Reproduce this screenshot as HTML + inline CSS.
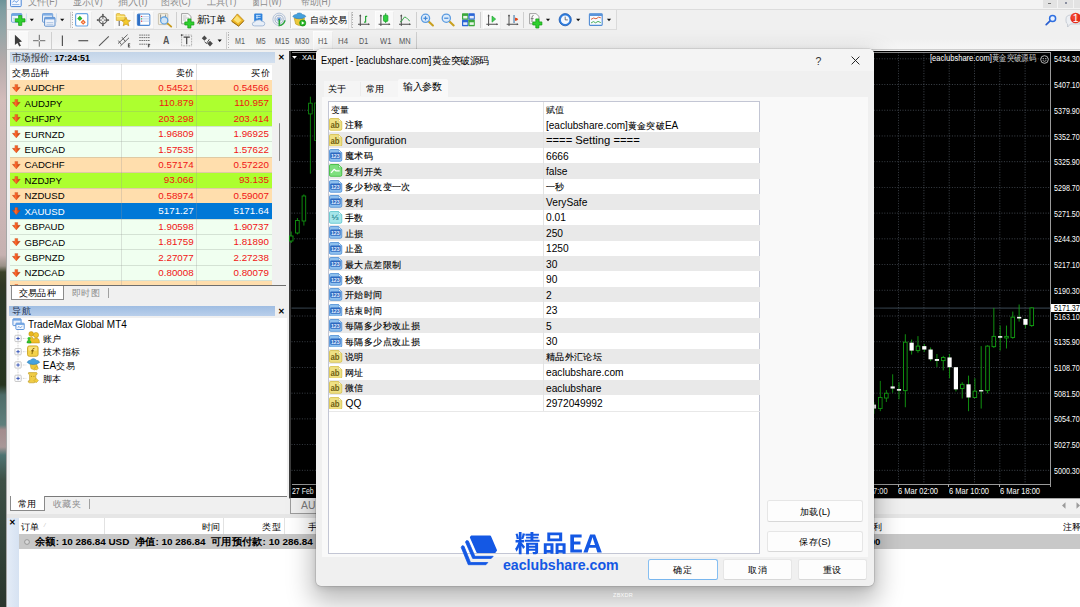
<!DOCTYPE html><html lang="zh"><head><meta charset="utf-8"><title>MT4 Expert</title><style>
*{box-sizing:border-box;margin:0;padding:0}
html,body{width:1080px;height:607px;overflow:hidden;background:#f0f0f0;font-family:"Liberation Sans",sans-serif;color:#000}
body{position:relative}
.a{position:absolute}
.t{position:absolute;white-space:nowrap;line-height:1}
.r{text-align:right}
</style></head><body>
<div class="a" style="left:0px;top:0px;width:6.2px;height:607px;background:linear-gradient(180deg,#6d9498 0px,#7d9da0 8px,#93a6a8 30px,#b3aaaa 60px,#d2bcbb 100px,#cdb9b8 150px,#cdb6b6 200px,#c6b1b1 255px,#9a9088 266px,#3a4228 272px,#2f3824 285px,#2a3826 300px,#26341f 385px,#4d6b68 395px,#5e7f7c 425px,#a38d8e 430px,#a89898 447px,#4e7472 455px,#3d4f45 480px,#33443a 540px,#2a362e 607px);"></div>
<div class="a" style="left:5.8px;top:0px;width:0.9px;height:607px;background:#a6a6a6;"></div>
<div class="a" style="left:6.7px;top:0px;width:1074px;height:607px;background:#f0f0f0;"></div>
<div class="a" style="left:7px;top:0px;width:1073px;height:9px;background:#f3f3f3;"></div>
<div class="a" style="left:7px;top:9px;width:1073px;height:1px;background:#dcdcdc;"></div>
<div class="t " style="left:27.5px;top:-4.05px;font-size:10.5px;color:#8c8c8c;;transform:scaleX(0.8328);transform-origin:left center;">文件(F)</div>
<div class="t " style="left:72.5px;top:-4.05px;font-size:10.5px;color:#8c8c8c;;transform:scaleX(0.8194);transform-origin:left center;">显示(V)</div>
<div class="t " style="left:118px;top:-4.05px;font-size:10.5px;color:#8c8c8c;;transform:scaleX(0.9241);transform-origin:left center;">插入(I)</div>
<div class="t " style="left:161px;top:-4.05px;font-size:10.5px;color:#8c8c8c;;transform:scaleX(0.8065);transform-origin:left center;">图表(C)</div>
<div class="t " style="left:206.7px;top:-4.05px;font-size:10.5px;color:#8c8c8c;;transform:scaleX(0.8328);transform-origin:left center;">工具(T)</div>
<div class="t " style="left:251.7px;top:-4.05px;font-size:10.5px;color:#8c8c8c;;transform:scaleX(0.7582);transform-origin:left center;">窗口(W)</div>
<div class="t " style="left:300.8px;top:-4.05px;font-size:10.5px;color:#8c8c8c;;transform:scaleX(0.8065);transform-origin:left center;">帮助(H)</div>
<div class="a" style="left:7px;top:10px;width:610px;height:19.8px;background:#f2f2f2;border-right:1px solid #dadada;border-bottom:1px solid #dcdcdc"></div>
<div class="a" style="left:7px;top:30px;width:1073px;height:19.8px;background:linear-gradient(180deg,#f0f0f0 0%,#f0f0f0 45%,#f6f6f6 100%);border-bottom:0.8px solid #cdcdcd"></div>
<div class="a" style="left:7.6px;top:12px;width:0.8px;height:16px;background:repeating-linear-gradient(180deg,#b4b4b4 0 0.8px,transparent 0.8px 1.7px)"></div>
<div class="a" style="left:7.6px;top:32px;width:0.8px;height:16.5px;background:repeating-linear-gradient(180deg,#b4b4b4 0 0.8px,transparent 0.8px 1.7px)"></div>
<div class="a" style="left:70.4px;top:11.5px;width:0.8px;height:16.5px;background:#cfcfcf"></div>
<div class="a" style="left:72.4px;top:12px;width:0.8px;height:16px;background:repeating-linear-gradient(180deg,#b4b4b4 0 0.8px,transparent 0.8px 1.7px)"></div>
<div class="a" style="left:73px;top:11px;width:19.00px;height:17.60px;background:#f9f9f9;box-shadow:inset 0.6px 0.6px 0 #fff,inset -0.5px -0.5px 0 #e2e2e2"></div>
<div class="a" style="left:113.8px;top:11px;width:19.90px;height:17.60px;background:#f9f9f9;box-shadow:inset 0.6px 0.6px 0 #fff,inset -0.5px -0.5px 0 #e2e2e2"></div>
<div class="a" style="left:135px;top:11px;width:18.80px;height:17.60px;background:#f9f9f9;box-shadow:inset 0.6px 0.6px 0 #fff,inset -0.5px -0.5px 0 #e2e2e2"></div>
<div class="a" style="left:175.8px;top:11.5px;width:0.8px;height:16.5px;background:#cfcfcf"></div>
<div class="a" style="left:290px;top:11.5px;width:0.8px;height:16.5px;background:#cfcfcf"></div>
<div class="a" style="left:290.8px;top:10.8px;width:58.4px;height:18px;background:#f9f9f9;box-shadow:inset 0.6px 0.6px 0 #fff,inset -0.6px -0.6px 0 #dcdcdc"></div>
<div class="a" style="left:350.6px;top:11.5px;width:0.8px;height:16.5px;background:#cfcfcf"></div>
<div class="a" style="left:352px;top:12px;width:0.8px;height:16px;background:repeating-linear-gradient(180deg,#b4b4b4 0 0.8px,transparent 0.8px 1.7px)"></div>
<div class="a" style="left:374.7px;top:11px;width:19.10px;height:17.60px;background:#f9f9f9;box-shadow:inset 0.6px 0.6px 0 #fff,inset -0.5px -0.5px 0 #e2e2e2"></div>
<div class="a" style="left:415.5px;top:11.5px;width:0.8px;height:16.5px;background:#cfcfcf"></div>
<div class="a" style="left:480.3px;top:11.5px;width:0.8px;height:16.5px;background:#cfcfcf"></div>
<div class="a" style="left:482.8px;top:11px;width:18.70px;height:17.60px;background:#f9f9f9;box-shadow:inset 0.6px 0.6px 0 #fff,inset -0.5px -0.5px 0 #e2e2e2"></div>
<div class="a" style="left:523px;top:11.5px;width:0.8px;height:16.5px;background:#cfcfcf"></div>
<div class="a" style="left:9.4px;top:31px;width:19.40px;height:18.40px;background:#f9f9f9;box-shadow:inset 0.6px 0.6px 0 #fff,inset -0.5px -0.5px 0 #e2e2e2"></div>
<div class="a" style="left:50.5px;top:32px;width:0.8px;height:17px;background:#cfcfcf"></div>
<div class="a" style="left:226.4px;top:32px;width:0.8px;height:17px;background:#cfcfcf"></div>
<div class="a" style="left:228.3px;top:32px;width:0.8px;height:16.5px;background:repeating-linear-gradient(180deg,#b4b4b4 0 0.8px,transparent 0.8px 1.7px)"></div>
<div class="a" style="left:313.3px;top:31px;width:19.50px;height:18.60px;background:#f9f9f9;box-shadow:inset 0.6px 0.6px 0 #fff,inset -0.5px -0.5px 0 #e2e2e2"></div>
<div class="a" style="left:415.5px;top:32px;width:0.8px;height:17px;background:#cfcfcf"></div>
<svg class="a" style="left:0;top:0" width="1080" height="52" viewBox="0 0 1080 52"><rect x="11.6" y="13.6" width="10.2" height="8.6" rx="0.8" fill="#f4f8fd" stroke="#5e97d6" stroke-width="0.9"/><rect x="11.6" y="13.6" width="10.2" height="2.3" fill="#6ea6e2"/><path d="M13 18.3H15.5M13 20H15" stroke="#8fb4e0" stroke-width="0.7"/>
<path d="M18.6 15.6H21.8V18.8H25V22H21.8V25.4H18.6V22H15.3V18.8H18.6Z" fill="#2fd02f" stroke="#109a10" stroke-width="0.7" stroke-linejoin="round"/>
<path d="M26.4 13.4V22.3" stroke="#bcd4ee" stroke-width="0.7"/>
<path d="M29.7 18.8H33.9L31.8 21.2Z" fill="#111"/>
<rect x="42.5" y="13.6" width="10.2" height="8.6" rx="0.8" fill="#e6eef9" stroke="#5e90cf" stroke-width="0.9"/><rect x="42.5" y="13.6" width="10.2" height="2" fill="#7faee4"/>
<rect x="44.6" y="17.4" width="10.4" height="8.8" rx="0.8" fill="#eef3fb" stroke="#4f84c6" stroke-width="0.9"/><rect x="44.6" y="17.4" width="10.4" height="2" fill="#6d9fdc"/><path d="M46.5 22.5H53.3M46.5 24.3H53.3" stroke="#9db9dd" stroke-width="0.7"/>
<path d="M56.4 13.4V22.3" stroke="#bcd4ee" stroke-width="0.7"/>
<path d="M60.1 18.8H64.3L62.2 21.2Z" fill="#111"/>
<rect x="75.6" y="13.6" width="12.2" height="12.4" rx="1.6" fill="#fff" stroke="#6aa6e4" stroke-width="1.2"/>
<path d="M79.8 15.8L82.4 18.4L79.8 21L77.2 18.4Z" fill="#2bb32b"/><path d="M83.2 19.6L85.8 22.2L83.2 24.8L80.6 22.2Z" fill="#ee6a2e"/><circle cx="83.2" cy="22.2" r="0.8" fill="#ffd8c0"/>
<circle cx="102.9" cy="20.1" r="3.7" fill="none" stroke="#5a5a5a" stroke-width="1.1"/><path d="M102.9 14.2V26M97 20.1H108.8" stroke="#5a5a5a" stroke-width="1"/><path d="M102.9 13.6L104.2 15.6H101.6ZM102.9 26.6L104.2 24.6H101.6ZM96.4 20.1L98.4 18.8V21.4ZM109.4 20.1L107.4 18.8V21.4Z" fill="#555"/><circle cx="102.9" cy="20.1" r="1.2" fill="#f0f0f0"/>
<path d="M116.3 14.6Q116.3 13.6 117.3 13.6H119.6L120.6 14.8H124.2Q125 14.8 125 15.8V20.4H116.3Z" fill="#f6d95c" stroke="#d2a52a" stroke-width="0.7"/><path d="M116.6 16.4H124.8" stroke="#fff3b0" stroke-width="0.8"/>
<path d="M119.2 21V26" stroke="#333" stroke-width="0.8"/>
<path d="M126 17.2L127.3 20.2L130.4 20.5L128 22.6L128.8 25.8L126 24.1L123.2 25.8L124 22.6L121.6 20.5L124.7 20.2Z" fill="#f4cb2c" stroke="#c89612" stroke-width="0.7" stroke-linejoin="round"/>
<rect x="137.4" y="14" width="12.4" height="11.4" rx="1.2" fill="#fff" stroke="#4c8bd6" stroke-width="1.1"/><rect x="137.6" y="14.2" width="2.6" height="11" fill="#2f6fc4"/><path d="M140.6 16.6H149.4M140.6 18.9H149.4M140.6 21.2H149.4" stroke="#c5d7f2" stroke-width="1.2"/><circle cx="141.6" cy="16.4" r="0.6" fill="#e33"/><circle cx="141.6" cy="18.8" r="0.6" fill="#2a2"/><circle cx="141.6" cy="21.2" r="0.6" fill="#e33"/>
<rect x="158.4" y="13.6" width="9.4" height="11" rx="0.6" fill="#f3efe4" stroke="#b9b09a" stroke-width="0.7"/><path d="M160.6 14.5V19M165.6 14.5V19" stroke="#666" stroke-width="0.7"/>
<path d="M166.6 22.6L171.2 26.6" stroke="#c79a1c" stroke-width="1.9" stroke-linecap="round"/><circle cx="164.2" cy="20.4" r="3.6" fill="#cfe4f7" fill-opacity=".92" stroke="#5a9fe0" stroke-width="1.2"/>
<path d="M181.6 13.6H188L191 16.4V23.8H181.6Z" fill="#fbfbfb" stroke="#8c8c8c" stroke-width="0.8"/><path d="M183 16H186.5M183 18H189M183 20H186" stroke="#aaa" stroke-width="0.7"/>
<path d="M187.8 18.9H190.9V21.9H193.9V25H190.9V28H187.8V25H184.8V21.9H187.8Z" fill="#2fd02f" stroke="#109a10" stroke-width="0.7" stroke-linejoin="round"/>
<path d="M237.4 13.9L243.9 20.6L238.6 25.9L231.5 20.9Z" fill="#efb928" stroke="#b8800f" stroke-width="0.8" stroke-linejoin="round"/><path d="M236.9 15.6L241.4 20.3L238 23.2L233.6 19.7Z" fill="#fbe27a"/><path d="M231.7 21.4L238.6 26.2L243.8 21" stroke="#9a6a08" stroke-width="0.9" fill="none"/>
<rect x="254.2" y="13.4" width="8.2" height="8" rx="1" fill="#2e82dc"/><path d="M256 15.4H260.6M256 17.4H260.6M257 15.4V19" stroke="#d8ecff" stroke-width="0.8"/><path d="M254.6 25.9Q252.2 25.9 252.3 23.8Q252.5 21.8 254.7 21.9Q255.6 19.6 258.2 20.1Q260.3 18.9 261.8 21.3Q264.8 21.2 264.8 23.7Q264.7 25.9 262.4 25.9Z" fill="#e8eff8" stroke="#8aa6cc" stroke-width="0.7"/>
<circle cx="279.1" cy="19.3" r="6.2" fill="none" stroke="#b4c3d8" stroke-width="1"/><circle cx="279.1" cy="19.3" r="4.1" fill="none" stroke="#9fb3d0" stroke-width="1"/><circle cx="279.1" cy="19.3" r="2.2" fill="#c9d8ec" stroke="#8ca6cc" stroke-width="0.7"/><circle cx="279.1" cy="19.3" r="1.1" fill="#2a6fd8"/><path d="M279.3 19.6V25.6Q283.6 25.2 285 20.4" fill="none" stroke="#2aa43a" stroke-width="1.5"/>
<path d="M294.2 18L304.4 18L304 24.6Q299 26.8 295.6 24Z" fill="#ecc83a" stroke="#b8961c" stroke-width="0.6"/><path d="M292.8 16.6Q293.4 14.6 296.4 14.4Q297.2 12.9 299.4 13Q301.6 13 302.4 14.5Q305.4 14.8 305.8 16.6Q303 18.9 299.2 18.8Q295.4 18.9 292.8 16.6Z" fill="#44a0dc" stroke="#2a7ab8" stroke-width="0.6"/><circle cx="302.7" cy="23" r="3.1" fill="#22b422" stroke="#108a10" stroke-width="0.6"/><path d="M301.7 21.3V24.7L304.5 23Z" fill="#fff"/>
<path d="M360.3 15V26M358.0 24.25H369.3" stroke="#4e4e4e" stroke-width="1" fill="none"/><path d="M360.3 14.2L361.40000000000003 16.2H359.2ZM369.90000000000003 24.25L368.1 23.2V25.3Z" fill="#4e4e4e"/>
<path d="M365.6 16V22.6M365.6 16.4H367.2M364 22.2H365.6" stroke="#2aa83a" stroke-width="1.2" fill="none"/>
<path d="M380.9 15V26M378.59999999999997 24.25H389.9" stroke="#4e4e4e" stroke-width="1" fill="none"/><path d="M380.9 14.2L382.0 16.2H379.79999999999995ZM390.5 24.25L388.7 23.2V25.3Z" fill="#4e4e4e"/>
<path d="M385.7 13.2V23" stroke="#1a9a2a" stroke-width="0.9"/><rect x="383.5" y="15.2" width="4.4" height="6.2" rx="0.8" fill="#2fd03f" stroke="#149a24" stroke-width="0.7"/>
<path d="M401.3 15V26M399.0 24.25H410.3" stroke="#4e4e4e" stroke-width="1" fill="none"/><path d="M401.3 14.2L402.40000000000003 16.2H400.2ZM410.90000000000003 24.25L409.1 23.2V25.3Z" fill="#4e4e4e"/>
<path d="M400 22Q402 21.4 403 19Q404.4 16 406 17.4Q408 19.6 409.8 21" stroke="#3aa84a" stroke-width="1" fill="none"/>
<path d="M428.7 21.5L432.9 25.5" stroke="#c9a020" stroke-width="2.1" stroke-linecap="round"/><circle cx="425.5" cy="18.3" r="4.1" fill="#dcebfa" stroke="#5b9be0" stroke-width="1.3"/>
<path d="M423.4 18.3H427.6" stroke="#3f86d8" stroke-width="1.2"/>
<path d="M425.5 16.2V20.400000000000002" stroke="#3f86d8" stroke-width="1.2"/>
<path d="M449.5 21.4L453.7 25.4" stroke="#c9a020" stroke-width="2.1" stroke-linecap="round"/><circle cx="446.3" cy="18.2" r="4.1" fill="#dcebfa" stroke="#5b9be0" stroke-width="1.3"/>
<path d="M444.2 18.2H448.40000000000003" stroke="#3f86d8" stroke-width="1.2"/>
<rect x="462" y="13.3" width="6.5" height="6.5" rx="0.6" fill="#3aa83a"/><rect x="468.4" y="13.3" width="6.4" height="6.5" rx="0.6" fill="#2b66d6"/><rect x="462" y="19.7" width="6.5" height="6.5" rx="0.6" fill="#2b66d6"/><rect x="468.4" y="19.7" width="6.4" height="6.5" rx="0.6" fill="#3aa83a"/>
<rect x="463.2" y="15.9" width="4.2" height="2.6" fill="#e8f4e8"/><rect x="469.6" y="15.9" width="4.2" height="2.6" fill="#e4ecfb"/><rect x="463.2" y="22.3" width="4.2" height="2.6" fill="#e4ecfb"/><rect x="469.6" y="22.3" width="4.2" height="2.6" fill="#e8f4e8"/>
<path d="M488.6 15V26M486.3 24.25H497.6" stroke="#4e4e4e" stroke-width="1" fill="none"/><path d="M488.6 14.2L489.70000000000005 16.2H487.5ZM498.20000000000005 24.25L496.40000000000003 23.2V25.3Z" fill="#4e4e4e"/>
<path d="M492 16V22.2L495.7 19.1Z" fill="#3fcf4f" stroke="#1f9a2f" stroke-width="0.6"/>
<path d="M509 15V26M506.7 24.25H518" stroke="#4e4e4e" stroke-width="1" fill="none"/><path d="M509 14.2L510.1 16.2H507.9ZM518.6 24.25L516.8 23.2V25.3Z" fill="#4e4e4e"/>
<rect x="513.2" y="15" width="1.7" height="8" fill="#7fa3c4"/><path d="M518.3 19.2L515 17.4V21Z" fill="#e0461c"/><circle cx="516.4" cy="19.2" r="1.2" fill="#e0461c"/>
<path d="M529.6 13.6H536L539 16.4V23.8H529.6Z" fill="#fbfbfb" stroke="#8c8c8c" stroke-width="0.8"/><path d="M533.6 15.5Q532 15.4 532 17.4V22M530.8 18.6H533.6" stroke="#666" stroke-width="0.8" fill="none"/>
<path d="M535.8 18.9H538.9V21.9H541.9V25H538.9V28H535.8V25H532.8V21.9H535.8Z" fill="#2fd02f" stroke="#109a10" stroke-width="0.7" stroke-linejoin="round"/>
<path d="M545.9 18.8H550.1L548 21.2Z" fill="#111"/>
<circle cx="565.2" cy="19.7" r="6.1" fill="#2f7fe0" stroke="#1c58b0" stroke-width="0.8"/><circle cx="565.2" cy="19.7" r="4.3" fill="#f4f8ff"/><path d="M565.2 16.6V19.9H567.8" stroke="#555" stroke-width="0.8" fill="none"/>
<path d="M576.1 18.8H580.3000000000001L578.2 21.2Z" fill="#111"/>
<rect x="589.4" y="13.8" width="12.8" height="11.6" rx="0.8" fill="#f7fafe" stroke="#4f8bd4" stroke-width="1.1"/><rect x="589.4" y="13.8" width="12.8" height="2.2" fill="#5b95da"/><path d="M591 19.4L593.6 18L596 18.8L598.6 17.2L600.8 17.8" stroke="#d8522a" stroke-width="0.9" fill="none"/><path d="M591 23L593.4 21.6L595.6 22.8L598 21.4L600.8 22.6" stroke="#3aa84a" stroke-width="0.9" fill="none"/>
<path d="M606.9 18.8H611.1L609 21.2Z" fill="#111"/>
<path d="M14.9 34.7V45.1L17.4 42.9L19.3 46.6L20.9 45.8L19.1 42.2L22 41.6Z" fill="#3c3c3c"/>
<path d="M39.3 34.8V46.7M33.1 40.7H45.3" stroke="#6a6a6a" stroke-width="1"/><rect x="38.6" y="40" width="1.4" height="1.4" fill="#f0f0f0"/>
<path d="M62.4 35.4V46" stroke="#555" stroke-width="1.2"/>
<path d="M78.4 40.7H88.2" stroke="#555" stroke-width="1.2"/>
<path d="M99 45.9L108.8 36.3" stroke="#5a5a5a" stroke-width="1.1"/>
<path d="M118 43.6L127.6 34.6M120.4 46L129 37.8M118.4 40.6L121.4 44.6M122 37.2L125.4 41.6" stroke="#555" stroke-width="0.9" fill="none"/><path d="M128.4 43.6V47.2M128.4 43.8H130.2M128.4 45.4H129.8M128.4 47H130.2" stroke="#333" stroke-width="0.8"/>
<path d="M139.2 35.1H150M139.2 37.6H150M139.2 40.5H150M139.2 44.2H150" stroke="#666" stroke-width="0.9" stroke-dasharray="1.6 0.6"/><path d="M148.4 44.4V47.4M148.4 44.6H150.2M148.4 46H149.8" stroke="#333" stroke-width="0.8"/>
<rect x="181.6" y="35" width="10" height="10.8" fill="none" stroke="#777" stroke-width="0.7" stroke-dasharray="0.8 0.8"/><path d="M183.6 37.2H189.8M186.7 37.2V44.2" stroke="#444" stroke-width="1.2"/><rect x="180.9" y="34.3" width="1.6" height="1.6" fill="#444"/>
<path d="M204.4 35.6L207 38.2L204.4 40.8L201.8 38.2Z" fill="#4a4a4a"/><path d="M210 40.8L212.8 43.6L210 46.4L207.2 43.6Z" fill="#4a4a4a"/><path d="M204.6 41.6L206.4 43.6L209.4 39.2" stroke="#444" stroke-width="0.9" fill="none"/>
<path d="M217.6 39.599999999999994H221.79999999999998L219.7 42.0Z" fill="#111"/>
<path d="M1050.6 20.4L1046.2 24.6" stroke="#2a5fd0" stroke-width="1.7" stroke-linecap="round"/><circle cx="1052.6" cy="18.4" r="3" fill="#eaf2ff" stroke="#2f6fe0" stroke-width="1.5"/>
<path d="M1066 19Q1066 15 1071 15H1080V24H1070.5L1067.6 27V24Q1066 23.4 1066 21Z" fill="#eceff3" stroke="#b8bec8" stroke-width="0.7"/><circle cx="1075.6" cy="18" r="5.3" fill="#e5301c"/><circle cx="1074.6" cy="16.6" r="3.4" fill="#ff5a44" fill-opacity=".45"/></svg>
<div class="t " style="left:196.6px;top:14.85px;font-size:9.7px;color:#000;"><span style="letter-spacing:-0.3px">新订单</span></div>
<div class="t " style="left:309.7px;top:14.97px;font-size:9.45px;color:#000;"><span style="letter-spacing:0.45px">自动交易</span></div>
<div class="t " style="left:234.8px;top:36.70px;font-size:8.4px;color:#5a5a5a;;transform:scaleX(0.8591);transform-origin:left center;">M1</div>
<div class="t " style="left:255.6px;top:36.70px;font-size:8.4px;color:#5a5a5a;;transform:scaleX(0.8247);transform-origin:left center;">M5</div>
<div class="t " style="left:274.5px;top:36.70px;font-size:8.4px;color:#5a5a5a;;transform:scaleX(0.8713);transform-origin:left center;">M15</div>
<div class="t " style="left:294.9px;top:36.70px;font-size:8.4px;color:#5a5a5a;;transform:scaleX(0.8713);transform-origin:left center;">M30</div>
<div class="t " style="left:317.8px;top:36.70px;font-size:8.4px;color:#5a5a5a;;transform:scaleX(0.8956);transform-origin:left center;">H1</div>
<div class="t " style="left:337.8px;top:36.70px;font-size:8.4px;color:#5a5a5a;;transform:scaleX(0.9329);transform-origin:left center;">H4</div>
<div class="t " style="left:359.3px;top:36.70px;font-size:8.4px;color:#5a5a5a;;transform:scaleX(0.8490);transform-origin:left center;">D1</div>
<div class="t " style="left:379.5px;top:36.70px;font-size:8.4px;color:#5a5a5a;;transform:scaleX(0.9075);transform-origin:left center;">W1</div>
<div class="t " style="left:399px;top:36.70px;font-size:8.4px;color:#5a5a5a;;transform:scaleX(0.8978);transform-origin:left center;">MN</div>
<div class="t " style="left:1072.8px;top:13.35px;font-size:10.5px;color:#fff;">1</div>
<div class="a" style="left:1042.6px;top:0px;width:14.2px;height:7.8px;background:#e3e3e3;"></div>
<div class="a" style="left:1058.1px;top:0px;width:14.5px;height:7.8px;background:#e3e3e3;"></div>
<div class="a" style="left:1074px;top:0px;width:6px;height:7.8px;background:#e3e3e3;"></div>
<div class="a" style="left:1048px;top:3.4px;width:3px;height:0.9px;background:#777;"></div>
<div class="a" style="left:1064.5px;top:1.5px;width:2.4px;height:2.4px;background:#8a8fa0;"></div>
<div class="t " style="left:162.6px;top:35.90px;font-size:10px;color:#555;font-weight:bold;transform:scaleX(0.8847);transform-origin:left center;">A</div>
<svg class="a" style="left:10px;top:0" width="12" height="8" viewBox="0 0 12 8"><rect x="0.6" y="-3" width="10.6" height="9.6" rx="0.8" fill="#f4f8ff" stroke="#4a86d8" stroke-width="1"/><path d="M2.4 2.2L4.4 0.6L6 2.4L8.6 0.4" stroke="#4a86d8" stroke-width="0.8" fill="none"/><path d="M2.2 4.6H9.4" stroke="#7aa6e0" stroke-width="0.8"/></svg>
<div class="a" style="left:9.5px;top:52px;width:265.5px;height:10.5px;background:linear-gradient(180deg,#c3d4e8,#d3e0ef);"></div>
<div class="t " style="left:12px;top:52.75px;font-size:9.5px;color:#000;;transform:scaleX(0.9362);transform-origin:left center;"><span style="color:#333">市场报价:</span> <b>17:24:51</b></div>
<div class="t " style="left:277.6px;top:53.10px;font-size:8.4px;color:#000;font-weight:bold">&#x2715;</div>
<div class="a" style="left:10px;top:64.5px;width:262.4px;height:221px;background:#fff;"></div>
<div class="t " style="left:12px;top:67.58px;font-size:9.45px;color:#000;"><span style="letter-spacing:0.45px">交易品种</span></div>
<div class="t r " style="right:885.20px;top:67.58px;font-size:9.45px;color:#000;"><span style="letter-spacing:0.45px">卖价</span></div>
<div class="t r " style="right:809.80px;top:67.58px;font-size:9.45px;color:#000;"><span style="letter-spacing:0.45px">买价</span></div>
<div class="a" style="left:10px;top:64px;width:262.4px;height:221.5px;overflow:hidden">
<div class="a" style="left:0;top:16.00px;width:263px;height:15.73px;background:#ffdead"></div>
<svg class="a" style="left:2.4px;top:19.52px" width="8.6" height="8.2" viewBox="0 0 8.6 8.2"><defs><linearGradient id="ag0" x1="0" y1="0" x2="1" y2="0"><stop offset="0" stop-color="#c8380c"/><stop offset=".4" stop-color="#ff6a2c"/><stop offset="1" stop-color="#b83408"/></linearGradient></defs><path d="M2.9 0.4H5.7V3.3H8.3L4.3 7.9L0.3 3.3H2.9Z" fill="url(#ag0)" stroke="#b8400f" stroke-opacity=".55" stroke-width=".5" stroke-linejoin="round"/></svg>
<div class="t" style="left:14.6px;top:19.31px;font-size:9.6px;color:#000">AUDCHF</div>
<div class="t r" style="right:78.69999999999999px;top:18.81px;font-size:9.8px;color:#f01414">0.54521</div>
<div class="t r" style="right:3.5px;top:18.81px;font-size:9.8px;color:#f01414">0.54566</div>
<div class="a" style="left:0;top:31.43px;width:263px;height:15.73px;background:#adff2f"></div>
<div class="a" style="left:0;top:31.13px;width:263px;height:0.6px;background:rgba(140,150,140,.28)"></div>
<svg class="a" style="left:2.4px;top:34.95px" width="8.6" height="8.2" viewBox="0 0 8.6 8.2"><defs><linearGradient id="ag1" x1="0" y1="0" x2="1" y2="0"><stop offset="0" stop-color="#c8380c"/><stop offset=".4" stop-color="#ff6a2c"/><stop offset="1" stop-color="#b83408"/></linearGradient></defs><path d="M2.9 0.4H5.7V3.3H8.3L4.3 7.9L0.3 3.3H2.9Z" fill="url(#ag1)" stroke="#b8400f" stroke-opacity=".55" stroke-width=".5" stroke-linejoin="round"/></svg>
<div class="t" style="left:14.6px;top:34.75px;font-size:9.6px;color:#000">AUDJPY</div>
<div class="t r" style="right:78.69999999999999px;top:34.25px;font-size:9.8px;color:#f01414">110.879</div>
<div class="t r" style="right:3.5px;top:34.25px;font-size:9.8px;color:#f01414">110.957</div>
<div class="a" style="left:0;top:46.86px;width:263px;height:15.73px;background:#adff2f"></div>
<div class="a" style="left:0;top:46.56px;width:263px;height:0.6px;background:rgba(140,150,140,.28)"></div>
<svg class="a" style="left:2.4px;top:50.38px" width="8.6" height="8.2" viewBox="0 0 8.6 8.2"><defs><linearGradient id="ag2" x1="0" y1="0" x2="1" y2="0"><stop offset="0" stop-color="#c8380c"/><stop offset=".4" stop-color="#ff6a2c"/><stop offset="1" stop-color="#b83408"/></linearGradient></defs><path d="M2.9 0.4H5.7V3.3H8.3L4.3 7.9L0.3 3.3H2.9Z" fill="url(#ag2)" stroke="#b8400f" stroke-opacity=".55" stroke-width=".5" stroke-linejoin="round"/></svg>
<div class="t" style="left:14.6px;top:50.18px;font-size:9.6px;color:#000">CHFJPY</div>
<div class="t r" style="right:78.69999999999999px;top:49.68px;font-size:9.8px;color:#f01414">203.298</div>
<div class="t r" style="right:3.5px;top:49.68px;font-size:9.8px;color:#f01414">203.414</div>
<div class="a" style="left:0;top:62.29px;width:263px;height:15.73px;background:#f0fff0"></div>
<div class="a" style="left:0;top:61.99px;width:263px;height:0.6px;background:rgba(140,150,140,.28)"></div>
<svg class="a" style="left:2.4px;top:65.80px" width="8.6" height="8.2" viewBox="0 0 8.6 8.2"><defs><linearGradient id="ag3" x1="0" y1="0" x2="1" y2="0"><stop offset="0" stop-color="#c8380c"/><stop offset=".4" stop-color="#ff6a2c"/><stop offset="1" stop-color="#b83408"/></linearGradient></defs><path d="M2.9 0.4H5.7V3.3H8.3L4.3 7.9L0.3 3.3H2.9Z" fill="url(#ag3)" stroke="#b8400f" stroke-opacity=".55" stroke-width=".5" stroke-linejoin="round"/></svg>
<div class="t" style="left:14.6px;top:65.60px;font-size:9.6px;color:#000">EURNZD</div>
<div class="t r" style="right:78.69999999999999px;top:65.10px;font-size:9.8px;color:#f01414">1.96809</div>
<div class="t r" style="right:3.5px;top:65.10px;font-size:9.8px;color:#f01414">1.96925</div>
<div class="a" style="left:0;top:77.72px;width:263px;height:15.73px;background:#f0fff0"></div>
<div class="a" style="left:0;top:77.42px;width:263px;height:0.6px;background:rgba(140,150,140,.28)"></div>
<svg class="a" style="left:2.4px;top:81.23px" width="8.6" height="8.2" viewBox="0 0 8.6 8.2"><defs><linearGradient id="ag4" x1="0" y1="0" x2="1" y2="0"><stop offset="0" stop-color="#c8380c"/><stop offset=".4" stop-color="#ff6a2c"/><stop offset="1" stop-color="#b83408"/></linearGradient></defs><path d="M2.9 0.4H5.7V3.3H8.3L4.3 7.9L0.3 3.3H2.9Z" fill="url(#ag4)" stroke="#b8400f" stroke-opacity=".55" stroke-width=".5" stroke-linejoin="round"/></svg>
<div class="t" style="left:14.6px;top:81.03px;font-size:9.6px;color:#000">EURCAD</div>
<div class="t r" style="right:78.69999999999999px;top:80.53px;font-size:9.8px;color:#f01414">1.57535</div>
<div class="t r" style="right:3.5px;top:80.53px;font-size:9.8px;color:#f01414">1.57622</div>
<div class="a" style="left:0;top:93.15px;width:263px;height:15.73px;background:#ffdead"></div>
<div class="a" style="left:0;top:92.85px;width:263px;height:0.6px;background:rgba(140,150,140,.28)"></div>
<svg class="a" style="left:2.4px;top:96.67px" width="8.6" height="8.2" viewBox="0 0 8.6 8.2"><defs><linearGradient id="ag5" x1="0" y1="0" x2="1" y2="0"><stop offset="0" stop-color="#c8380c"/><stop offset=".4" stop-color="#ff6a2c"/><stop offset="1" stop-color="#b83408"/></linearGradient></defs><path d="M2.9 0.4H5.7V3.3H8.3L4.3 7.9L0.3 3.3H2.9Z" fill="url(#ag5)" stroke="#b8400f" stroke-opacity=".55" stroke-width=".5" stroke-linejoin="round"/></svg>
<div class="t" style="left:14.6px;top:96.47px;font-size:9.6px;color:#000">CADCHF</div>
<div class="t r" style="right:78.69999999999999px;top:95.97px;font-size:9.8px;color:#f01414">0.57174</div>
<div class="t r" style="right:3.5px;top:95.97px;font-size:9.8px;color:#f01414">0.57220</div>
<div class="a" style="left:0;top:108.58px;width:263px;height:15.73px;background:#adff2f"></div>
<div class="a" style="left:0;top:108.28px;width:263px;height:0.6px;background:rgba(140,150,140,.28)"></div>
<svg class="a" style="left:2.4px;top:112.09px" width="8.6" height="8.2" viewBox="0 0 8.6 8.2"><defs><linearGradient id="ag6" x1="0" y1="0" x2="1" y2="0"><stop offset="0" stop-color="#c8380c"/><stop offset=".4" stop-color="#ff6a2c"/><stop offset="1" stop-color="#b83408"/></linearGradient></defs><path d="M2.9 0.4H5.7V3.3H8.3L4.3 7.9L0.3 3.3H2.9Z" fill="url(#ag6)" stroke="#b8400f" stroke-opacity=".55" stroke-width=".5" stroke-linejoin="round"/></svg>
<div class="t" style="left:14.6px;top:111.89px;font-size:9.6px;color:#000">NZDJPY</div>
<div class="t r" style="right:78.69999999999999px;top:111.39px;font-size:9.8px;color:#f01414">93.066</div>
<div class="t r" style="right:3.5px;top:111.39px;font-size:9.8px;color:#f01414">93.135</div>
<div class="a" style="left:0;top:124.01px;width:263px;height:15.73px;background:#ffdead"></div>
<div class="a" style="left:0;top:123.71px;width:263px;height:0.6px;background:rgba(140,150,140,.28)"></div>
<svg class="a" style="left:2.4px;top:127.52px" width="8.6" height="8.2" viewBox="0 0 8.6 8.2"><defs><linearGradient id="ag7" x1="0" y1="0" x2="1" y2="0"><stop offset="0" stop-color="#c8380c"/><stop offset=".4" stop-color="#ff6a2c"/><stop offset="1" stop-color="#b83408"/></linearGradient></defs><path d="M2.9 0.4H5.7V3.3H8.3L4.3 7.9L0.3 3.3H2.9Z" fill="url(#ag7)" stroke="#b8400f" stroke-opacity=".55" stroke-width=".5" stroke-linejoin="round"/></svg>
<div class="t" style="left:14.6px;top:127.32px;font-size:9.6px;color:#000">NZDUSD</div>
<div class="t r" style="right:78.69999999999999px;top:126.82px;font-size:9.8px;color:#f01414">0.58974</div>
<div class="t r" style="right:3.5px;top:126.82px;font-size:9.8px;color:#f01414">0.59007</div>
<div class="a" style="left:0;top:139.44px;width:263px;height:15.73px;background:#0078d7"></div>
<svg class="a" style="left:2.4px;top:142.96px" width="8.6" height="8.2" viewBox="0 0 8.6 8.2"><defs><linearGradient id="ag8" x1="0" y1="0" x2="1" y2="0"><stop offset="0" stop-color="#c8380c"/><stop offset=".4" stop-color="#ff6a2c"/><stop offset="1" stop-color="#b83408"/></linearGradient></defs><path d="M2.9 0.4H5.7V3.3H8.3L4.3 7.9L0.3 3.3H2.9Z" fill="url(#ag8)" stroke="#b8400f" stroke-opacity=".55" stroke-width=".5" stroke-linejoin="round"/></svg>
<div class="t" style="left:14.6px;top:142.75px;font-size:9.6px;color:#fff">XAUUSD</div>
<div class="t r" style="right:78.69999999999999px;top:142.25px;font-size:9.8px;color:#fff">5171.27</div>
<div class="t r" style="right:3.5px;top:142.25px;font-size:9.8px;color:#fff">5171.64</div>
<div class="a" style="left:0;top:154.87px;width:263px;height:15.73px;background:#f0fff0"></div>
<div class="a" style="left:0;top:154.57px;width:263px;height:0.6px;background:rgba(140,150,140,.28)"></div>
<svg class="a" style="left:2.4px;top:158.39px" width="8.6" height="8.2" viewBox="0 0 8.6 8.2"><defs><linearGradient id="ag9" x1="0" y1="0" x2="1" y2="0"><stop offset="0" stop-color="#c8380c"/><stop offset=".4" stop-color="#ff6a2c"/><stop offset="1" stop-color="#b83408"/></linearGradient></defs><path d="M2.9 0.4H5.7V3.3H8.3L4.3 7.9L0.3 3.3H2.9Z" fill="url(#ag9)" stroke="#b8400f" stroke-opacity=".55" stroke-width=".5" stroke-linejoin="round"/></svg>
<div class="t" style="left:14.6px;top:158.19px;font-size:9.6px;color:#000">GBPAUD</div>
<div class="t r" style="right:78.69999999999999px;top:157.69px;font-size:9.8px;color:#f01414">1.90598</div>
<div class="t r" style="right:3.5px;top:157.69px;font-size:9.8px;color:#f01414">1.90737</div>
<div class="a" style="left:0;top:170.30px;width:263px;height:15.73px;background:#f0fff0"></div>
<div class="a" style="left:0;top:170.00px;width:263px;height:0.6px;background:rgba(140,150,140,.28)"></div>
<svg class="a" style="left:2.4px;top:173.82px" width="8.6" height="8.2" viewBox="0 0 8.6 8.2"><defs><linearGradient id="ag10" x1="0" y1="0" x2="1" y2="0"><stop offset="0" stop-color="#c8380c"/><stop offset=".4" stop-color="#ff6a2c"/><stop offset="1" stop-color="#b83408"/></linearGradient></defs><path d="M2.9 0.4H5.7V3.3H8.3L4.3 7.9L0.3 3.3H2.9Z" fill="url(#ag10)" stroke="#b8400f" stroke-opacity=".55" stroke-width=".5" stroke-linejoin="round"/></svg>
<div class="t" style="left:14.6px;top:173.62px;font-size:9.6px;color:#000">GBPCAD</div>
<div class="t r" style="right:78.69999999999999px;top:173.12px;font-size:9.8px;color:#f01414">1.81759</div>
<div class="t r" style="right:3.5px;top:173.12px;font-size:9.8px;color:#f01414">1.81890</div>
<div class="a" style="left:0;top:185.73px;width:263px;height:15.73px;background:#f0fff0"></div>
<div class="a" style="left:0;top:185.43px;width:263px;height:0.6px;background:rgba(140,150,140,.28)"></div>
<svg class="a" style="left:2.4px;top:189.25px" width="8.6" height="8.2" viewBox="0 0 8.6 8.2"><defs><linearGradient id="ag11" x1="0" y1="0" x2="1" y2="0"><stop offset="0" stop-color="#c8380c"/><stop offset=".4" stop-color="#ff6a2c"/><stop offset="1" stop-color="#b83408"/></linearGradient></defs><path d="M2.9 0.4H5.7V3.3H8.3L4.3 7.9L0.3 3.3H2.9Z" fill="url(#ag11)" stroke="#b8400f" stroke-opacity=".55" stroke-width=".5" stroke-linejoin="round"/></svg>
<div class="t" style="left:14.6px;top:189.04px;font-size:9.6px;color:#000">GBPNZD</div>
<div class="t r" style="right:78.69999999999999px;top:188.54px;font-size:9.8px;color:#f01414">2.27077</div>
<div class="t r" style="right:3.5px;top:188.54px;font-size:9.8px;color:#f01414">2.27238</div>
<div class="a" style="left:0;top:201.16px;width:263px;height:15.73px;background:#f0fff0"></div>
<div class="a" style="left:0;top:200.86px;width:263px;height:0.6px;background:rgba(140,150,140,.28)"></div>
<svg class="a" style="left:2.4px;top:204.67px" width="8.6" height="8.2" viewBox="0 0 8.6 8.2"><defs><linearGradient id="ag12" x1="0" y1="0" x2="1" y2="0"><stop offset="0" stop-color="#c8380c"/><stop offset=".4" stop-color="#ff6a2c"/><stop offset="1" stop-color="#b83408"/></linearGradient></defs><path d="M2.9 0.4H5.7V3.3H8.3L4.3 7.9L0.3 3.3H2.9Z" fill="url(#ag12)" stroke="#b8400f" stroke-opacity=".55" stroke-width=".5" stroke-linejoin="round"/></svg>
<div class="t" style="left:14.6px;top:204.47px;font-size:9.6px;color:#000">NZDCAD</div>
<div class="t r" style="right:78.69999999999999px;top:203.97px;font-size:9.8px;color:#f01414">0.80008</div>
<div class="t r" style="right:3.5px;top:203.97px;font-size:9.8px;color:#f01414">0.80079</div>
<div class="a" style="left:0;top:216.59px;width:263px;height:15.73px;background:#ffdead"></div>
<div class="a" style="left:0;top:216.29px;width:263px;height:0.6px;background:rgba(140,150,140,.28)"></div>
<svg class="a" style="left:2.4px;top:220.11px" width="8.6" height="8.2" viewBox="0 0 8.6 8.2"><defs><linearGradient id="ag13" x1="0" y1="0" x2="1" y2="0"><stop offset="0" stop-color="#c8380c"/><stop offset=".4" stop-color="#ff6a2c"/><stop offset="1" stop-color="#b83408"/></linearGradient></defs><path d="M2.9 0.4H5.7V3.3H8.3L4.3 7.9L0.3 3.3H2.9Z" fill="url(#ag13)" stroke="#b8400f" stroke-opacity=".55" stroke-width=".5" stroke-linejoin="round"/></svg>
<div class="t" style="left:14.6px;top:219.91px;font-size:9.6px;color:#000">NZDCHF</div>
<div class="t r" style="right:78.69999999999999px;top:219.41px;font-size:9.8px;color:#f01414">0.45798</div>
<div class="t r" style="right:3.5px;top:219.41px;font-size:9.8px;color:#f01414">0.45834</div>
<div class="a" style="left:111.2px;top:0;width:0.7px;height:222px;background:rgba(150,150,150,.28)"></div>
<div class="a" style="left:186.2px;top:0;width:0.7px;height:222px;background:rgba(150,150,150,.28)"></div>
</div>
<div class="a" style="left:279.3px;top:123px;width:1.2px;height:38px;background:#8a8a8a;border-radius:1px"></div>
<div class="a" style="left:10px;top:285.2px;width:276px;height:0.8px;background:#6e6e6e;"></div>
<div class="a" style="left:10.5px;top:285.5px;width:53px;height:14px;background:#fff;border:1px solid #8a8a8a;border-top:none"></div>
<div class="t " style="left:18.6px;top:287.80px;font-size:9.4px;color:#000;"><span style="letter-spacing:0.4px">交易品种</span></div>
<div class="t " style="left:72px;top:287.80px;font-size:9.4px;color:#8c8c8c;"><span style="letter-spacing:0.4px">即时图</span></div>
<div class="a" style="left:108px;top:288px;width:0.8px;height:10px;background:#a0a0a0;"></div>
<div class="a" style="left:9px;top:306px;width:266px;height:10px;background:linear-gradient(180deg,#9fbde2,#b9cfeb);"></div>
<div class="t " style="left:12.3px;top:306.30px;font-size:9.4px;color:#1e3250;"><span style="letter-spacing:0.4px">导航</span></div>
<div class="t " style="left:277.6px;top:306.80px;font-size:8.4px;color:#000;font-weight:bold">&#x2715;</div>
<div class="a" style="left:9.5px;top:317.5px;width:277.5px;height:178.5px;background:#fff;"></div>
<div class="t " style="left:27.5px;top:319.50px;font-size:10.2px;color:#000;;transform:scaleX(0.9785);transform-origin:left center;">TradeMax Global MT4</div>
<div class="t " style="left:42.8px;top:333.60px;font-size:9.4px;color:#000;"><span style="letter-spacing:0.4px">账户</span></div>
<div class="t " style="left:42.8px;top:347.20px;font-size:9.4px;color:#000;"><span style="letter-spacing:0.4px">技术指标</span></div>
<div class="t " style="left:42.8px;top:360.50px;font-size:9.4px;color:#000;"><span style="font-size:10px">EA</span><span style="font-size:9.4px;letter-spacing:0.4px;">交易</span></div>
<div class="t " style="left:42.8px;top:374.20px;font-size:9.4px;color:#000;"><span style="letter-spacing:0.4px">脚本</span></div>
<svg class="a" style="left:0;top:314px" width="60" height="74" viewBox="0 314 60 74">
<rect x="12.9" y="318.8" width="8.2" height="6.8" rx="0.7" fill="#eaf2fc" stroke="#4f8ad6" stroke-width="0.9"/><rect x="12.9" y="318.8" width="8.2" height="1.8" fill="#6ea2e2"/>
<rect x="15.9" y="323.2" width="8.3" height="6.3" rx="0.7" fill="#f4f8fe" stroke="#4f8ad6" stroke-width="0.9"/><rect x="15.9" y="323.2" width="8.3" height="1.7" fill="#6ea2e2"/><path d="M17.6 327.6L19 326.4L20.2 327.8L22.4 326.2" stroke="#4f8ad6" stroke-width="0.7" fill="none"/>
<path d="M18 330.6V378.4" stroke="#a8a8a8" stroke-width="0.7" stroke-dasharray="0.7 0.9"/>
<path d="M21.4 338.5H26.4" stroke="#a8a8a8" stroke-width="0.7" stroke-dasharray="0.7 0.9"/>
<rect x="14.9" y="335.3" width="6.3" height="6.3" rx="0.8" fill="#fcfcfc" stroke="#b4b4b4" stroke-width="0.7"/><path d="M16.3 338.5H19.8M18.05 336.75V340.25" stroke="#2c4db4" stroke-width="0.9"/>
<path d="M21.4 351.7H26.4" stroke="#a8a8a8" stroke-width="0.7" stroke-dasharray="0.7 0.9"/>
<rect x="14.9" y="348.5" width="6.3" height="6.3" rx="0.8" fill="#fcfcfc" stroke="#b4b4b4" stroke-width="0.7"/><path d="M16.3 351.7H19.8M18.05 349.95V353.45" stroke="#2c4db4" stroke-width="0.9"/>
<path d="M21.4 365H26.4" stroke="#a8a8a8" stroke-width="0.7" stroke-dasharray="0.7 0.9"/>
<rect x="14.9" y="361.8" width="6.3" height="6.3" rx="0.8" fill="#fcfcfc" stroke="#b4b4b4" stroke-width="0.7"/><path d="M16.3 365H19.8M18.05 363.25V366.75" stroke="#2c4db4" stroke-width="0.9"/>
<path d="M21.4 378.4H26.4" stroke="#a8a8a8" stroke-width="0.7" stroke-dasharray="0.7 0.9"/>
<rect x="14.9" y="375.2" width="6.3" height="6.3" rx="0.8" fill="#fcfcfc" stroke="#b4b4b4" stroke-width="0.7"/><path d="M16.3 378.4H19.8M18.05 376.65V380.15" stroke="#2c4db4" stroke-width="0.9"/>
<circle cx="31.2" cy="334" r="2.4" fill="#e8b51e" stroke="#b88a0c" stroke-width="0.5"/><circle cx="36" cy="335" r="2.6" fill="#f2c62e" stroke="#b88a0c" stroke-width="0.5"/><path d="M28.2 342.6Q28 337.2 31.4 337.2Q33.4 337.2 33.8 339.4Q34.4 338 36.2 338Q39.6 338 39.4 343H28.2Z" fill="#efbf28" stroke="#b88a0c" stroke-width="0.5"/><circle cx="29" cy="338.6" r="1.5" fill="#2fc42f"/><path d="M26.9 343Q26.8 340.2 29 340.2Q31.2 340.2 31.1 343Z" fill="#2fc42f" stroke="#149414" stroke-width="0.4"/>
<rect x="27.5" y="345.9" width="10.6" height="10.4" rx="1.8" fill="#f3d24a" stroke="#c59a18" stroke-width="0.8"/><rect x="28.5" y="346.8" width="8.6" height="4" rx="1.2" fill="#fbe68a" fill-opacity=".8"/><path d="M34.4 348.4Q32.8 348 32.6 349.8L32 354.2M31 350.8H34" stroke="#7a5a08" stroke-width="0.9" fill="none"/>
<path d="M30 363.4H36.4L37.8 367.6L34.6 370L31 368.6Z" fill="#eec83a" stroke="#b8961c" stroke-width="0.5"/><path d="M27.2 362.4Q27.6 360.4 30.6 360.2Q31.4 358.6 33.4 358.7Q35.4 358.7 36.2 360.2Q39.2 360.4 39.6 362.4Q36.8 364.6 33.2 364.5Q29.6 364.6 27.2 362.4Z" fill="#46a2de" stroke="#2a7ab8" stroke-width="0.6"/><path d="M36.4 366.2L38.4 368.2L36.4 370.2L34.4 368.2Z" fill="#f2cc3c" stroke="#b8961c" stroke-width="0.5"/>
<path d="M28.6 372.6H36.6Q37.8 373.6 36.6 374.8H35.8V380.6Q36 382.6 34 382.8H29.4Q27.6 382.4 28.4 380.8H29.6V374.8Q27.6 374 28.6 372.6Z" fill="#f0cc46" stroke="#b8961c" stroke-width="0.6"/><path d="M31 376.4H32M33.4 376.4H34.4" stroke="#9a7a10" stroke-width="0.7"/><path d="M36.2 378.4L38.4 380.6L36.2 382.8L34 380.6Z" fill="#f2cc3c" stroke="#b8961c" stroke-width="0.5"/>
</svg>
<div class="a" style="left:9.5px;top:495.6px;width:277.5px;height:0.8px;background:#7a7a7a;"></div>
<div class="a" style="left:10px;top:496px;width:34.5px;height:15px;background:#fff;border:1px solid #8a8a8a;border-top:none"></div>
<div class="t " style="left:18px;top:498.70px;font-size:9.4px;color:#000;"><span style="letter-spacing:0.4px">常用</span></div>
<div class="t " style="left:53px;top:498.70px;font-size:9.4px;color:#8c8c8c;"><span style="letter-spacing:0.4px">收藏夹</span></div>
<div class="a" style="left:89px;top:498.5px;width:0.8px;height:10px;background:#a0a0a0;"></div>
<div class="a" style="left:289.3px;top:50.5px;width:791px;height:447.4px;background:#000;"></div>
<div class="a" style="left:289.3px;top:50.5px;width:2.2px;height:447.4px;background:#3c3c3c;"></div>
<div class="a" style="left:291.5px;top:51.9px;width:759.0999999999999px;height:0.9px;background:#8a8a8a;"></div>
<div class="a" style="left:1050.1999999999998px;top:52.3px;width:0.9px;height:435.0px;background:#9a9a9a;"></div>
<div class="a" style="left:291.5px;top:483.90000000000003px;width:759.0999999999999px;height:0.9px;background:#9a9a9a;"></div>
<svg class="a" style="left:0;top:0" width="1080" height="607" viewBox="0 0 1080 607">
<line x1="291.5" y1="58.80" x2="1050.6" y2="58.80" stroke="#8b98a8" stroke-width="0.8" stroke-dasharray="1 1.6" opacity="0.58"/>
<line x1="291.5" y1="84.52" x2="1050.6" y2="84.52" stroke="#8b98a8" stroke-width="0.8" stroke-dasharray="1 1.6" opacity="0.58"/>
<line x1="291.5" y1="110.24" x2="1050.6" y2="110.24" stroke="#8b98a8" stroke-width="0.8" stroke-dasharray="1 1.6" opacity="0.58"/>
<line x1="291.5" y1="135.96" x2="1050.6" y2="135.96" stroke="#8b98a8" stroke-width="0.8" stroke-dasharray="1 1.6" opacity="0.58"/>
<line x1="291.5" y1="161.68" x2="1050.6" y2="161.68" stroke="#8b98a8" stroke-width="0.8" stroke-dasharray="1 1.6" opacity="0.58"/>
<line x1="291.5" y1="187.40" x2="1050.6" y2="187.40" stroke="#8b98a8" stroke-width="0.8" stroke-dasharray="1 1.6" opacity="0.58"/>
<line x1="291.5" y1="213.12" x2="1050.6" y2="213.12" stroke="#8b98a8" stroke-width="0.8" stroke-dasharray="1 1.6" opacity="0.58"/>
<line x1="291.5" y1="238.84" x2="1050.6" y2="238.84" stroke="#8b98a8" stroke-width="0.8" stroke-dasharray="1 1.6" opacity="0.58"/>
<line x1="291.5" y1="264.56" x2="1050.6" y2="264.56" stroke="#8b98a8" stroke-width="0.8" stroke-dasharray="1 1.6" opacity="0.58"/>
<line x1="291.5" y1="290.28" x2="1050.6" y2="290.28" stroke="#8b98a8" stroke-width="0.8" stroke-dasharray="1 1.6" opacity="0.58"/>
<line x1="291.5" y1="316.00" x2="1050.6" y2="316.00" stroke="#8b98a8" stroke-width="0.8" stroke-dasharray="1 1.6" opacity="0.58"/>
<line x1="291.5" y1="341.72" x2="1050.6" y2="341.72" stroke="#8b98a8" stroke-width="0.8" stroke-dasharray="1 1.6" opacity="0.58"/>
<line x1="291.5" y1="367.44" x2="1050.6" y2="367.44" stroke="#8b98a8" stroke-width="0.8" stroke-dasharray="1 1.6" opacity="0.58"/>
<line x1="291.5" y1="393.16" x2="1050.6" y2="393.16" stroke="#8b98a8" stroke-width="0.8" stroke-dasharray="1 1.6" opacity="0.58"/>
<line x1="291.5" y1="418.88" x2="1050.6" y2="418.88" stroke="#8b98a8" stroke-width="0.8" stroke-dasharray="1 1.6" opacity="0.58"/>
<line x1="291.5" y1="444.60" x2="1050.6" y2="444.60" stroke="#8b98a8" stroke-width="0.8" stroke-dasharray="1 1.6" opacity="0.58"/>
<line x1="291.5" y1="470.32" x2="1050.6" y2="470.32" stroke="#8b98a8" stroke-width="0.8" stroke-dasharray="1 1.6" opacity="0.58"/>
<line x1="316.70" y1="52.3" x2="316.70" y2="484.3" stroke="#8b98a8" stroke-width="0.8" stroke-dasharray="1 1.6" opacity="0.58"/>
<line x1="342.00" y1="52.3" x2="342.00" y2="484.3" stroke="#8b98a8" stroke-width="0.8" stroke-dasharray="1 1.6" opacity="0.58"/>
<line x1="367.30" y1="52.3" x2="367.30" y2="484.3" stroke="#8b98a8" stroke-width="0.8" stroke-dasharray="1 1.6" opacity="0.58"/>
<line x1="392.60" y1="52.3" x2="392.60" y2="484.3" stroke="#8b98a8" stroke-width="0.8" stroke-dasharray="1 1.6" opacity="0.58"/>
<line x1="417.90" y1="52.3" x2="417.90" y2="484.3" stroke="#8b98a8" stroke-width="0.8" stroke-dasharray="1 1.6" opacity="0.58"/>
<line x1="443.20" y1="52.3" x2="443.20" y2="484.3" stroke="#8b98a8" stroke-width="0.8" stroke-dasharray="1 1.6" opacity="0.58"/>
<line x1="468.50" y1="52.3" x2="468.50" y2="484.3" stroke="#8b98a8" stroke-width="0.8" stroke-dasharray="1 1.6" opacity="0.58"/>
<line x1="493.80" y1="52.3" x2="493.80" y2="484.3" stroke="#8b98a8" stroke-width="0.8" stroke-dasharray="1 1.6" opacity="0.58"/>
<line x1="519.10" y1="52.3" x2="519.10" y2="484.3" stroke="#8b98a8" stroke-width="0.8" stroke-dasharray="1 1.6" opacity="0.58"/>
<line x1="544.40" y1="52.3" x2="544.40" y2="484.3" stroke="#8b98a8" stroke-width="0.8" stroke-dasharray="1 1.6" opacity="0.58"/>
<line x1="569.70" y1="52.3" x2="569.70" y2="484.3" stroke="#8b98a8" stroke-width="0.8" stroke-dasharray="1 1.6" opacity="0.58"/>
<line x1="595.00" y1="52.3" x2="595.00" y2="484.3" stroke="#8b98a8" stroke-width="0.8" stroke-dasharray="1 1.6" opacity="0.58"/>
<line x1="620.30" y1="52.3" x2="620.30" y2="484.3" stroke="#8b98a8" stroke-width="0.8" stroke-dasharray="1 1.6" opacity="0.58"/>
<line x1="645.60" y1="52.3" x2="645.60" y2="484.3" stroke="#8b98a8" stroke-width="0.8" stroke-dasharray="1 1.6" opacity="0.58"/>
<line x1="670.90" y1="52.3" x2="670.90" y2="484.3" stroke="#8b98a8" stroke-width="0.8" stroke-dasharray="1 1.6" opacity="0.58"/>
<line x1="696.20" y1="52.3" x2="696.20" y2="484.3" stroke="#8b98a8" stroke-width="0.8" stroke-dasharray="1 1.6" opacity="0.58"/>
<line x1="721.50" y1="52.3" x2="721.50" y2="484.3" stroke="#8b98a8" stroke-width="0.8" stroke-dasharray="1 1.6" opacity="0.58"/>
<line x1="746.80" y1="52.3" x2="746.80" y2="484.3" stroke="#8b98a8" stroke-width="0.8" stroke-dasharray="1 1.6" opacity="0.58"/>
<line x1="772.10" y1="52.3" x2="772.10" y2="484.3" stroke="#8b98a8" stroke-width="0.8" stroke-dasharray="1 1.6" opacity="0.58"/>
<line x1="797.40" y1="52.3" x2="797.40" y2="484.3" stroke="#8b98a8" stroke-width="0.8" stroke-dasharray="1 1.6" opacity="0.58"/>
<line x1="822.70" y1="52.3" x2="822.70" y2="484.3" stroke="#8b98a8" stroke-width="0.8" stroke-dasharray="1 1.6" opacity="0.58"/>
<line x1="848.00" y1="52.3" x2="848.00" y2="484.3" stroke="#8b98a8" stroke-width="0.8" stroke-dasharray="1 1.6" opacity="0.58"/>
<line x1="873.30" y1="52.3" x2="873.30" y2="484.3" stroke="#8b98a8" stroke-width="0.8" stroke-dasharray="1 1.6" opacity="0.58"/>
<line x1="898.60" y1="52.3" x2="898.60" y2="484.3" stroke="#8b98a8" stroke-width="0.8" stroke-dasharray="1 1.6" opacity="0.58"/>
<line x1="923.90" y1="52.3" x2="923.90" y2="484.3" stroke="#8b98a8" stroke-width="0.8" stroke-dasharray="1 1.6" opacity="0.58"/>
<line x1="949.20" y1="52.3" x2="949.20" y2="484.3" stroke="#8b98a8" stroke-width="0.8" stroke-dasharray="1 1.6" opacity="0.58"/>
<line x1="974.50" y1="52.3" x2="974.50" y2="484.3" stroke="#8b98a8" stroke-width="0.8" stroke-dasharray="1 1.6" opacity="0.58"/>
<line x1="999.80" y1="52.3" x2="999.80" y2="484.3" stroke="#8b98a8" stroke-width="0.8" stroke-dasharray="1 1.6" opacity="0.58"/>
<line x1="1025.10" y1="52.3" x2="1025.10" y2="484.3" stroke="#8b98a8" stroke-width="0.8" stroke-dasharray="1 1.6" opacity="0.58"/>
<line x1="291.5" y1="308.1" x2="1050.6" y2="308.1" stroke="#3d4a57" stroke-width="1"/>
<line x1="873.96" y1="401.98" x2="873.96" y2="413.83" stroke="#12a012" stroke-width="0.9"/>
<rect x="871.86" y="404.61" width="4.2" height="3.95" fill="#fff"/>
<line x1="880.29" y1="380.90" x2="880.29" y2="411.20" stroke="#12a012" stroke-width="0.9"/>
<rect x="878.49" y="397.50" width="3.6" height="11.07" fill="#000" stroke="#12a012" stroke-width="0.9"/>
<line x1="886.35" y1="390.12" x2="886.35" y2="401.98" stroke="#12a012" stroke-width="0.9"/>
<rect x="884.55" y="393.28" width="3.6" height="4.74" fill="#000" stroke="#12a012" stroke-width="0.9"/>
<line x1="892.67" y1="374.31" x2="892.67" y2="392.75" stroke="#12a012" stroke-width="0.9"/>
<rect x="890.57" y="386.43" width="4.2" height="2.11" fill="#fff"/>
<line x1="898.99" y1="382.22" x2="898.99" y2="399.34" stroke="#12a012" stroke-width="0.9"/>
<rect x="896.89" y="389.07" width="4.2" height="1.58" fill="#fff"/>
<line x1="905.32" y1="334.26" x2="905.32" y2="407.25" stroke="#12a012" stroke-width="0.9"/>
<rect x="903.52" y="342.17" width="3.6" height="48.48" fill="#000" stroke="#12a012" stroke-width="0.9"/>
<line x1="911.64" y1="339.53" x2="911.64" y2="354.55" stroke="#12a012" stroke-width="0.9"/>
<rect x="909.54" y="342.69" width="4.2" height="7.90" fill="#fff"/>
<line x1="917.96" y1="336.11" x2="917.96" y2="352.71" stroke="#12a012" stroke-width="0.9"/>
<rect x="916.16" y="346.12" width="3.6" height="4.48" fill="#000" stroke="#12a012" stroke-width="0.9"/>
<line x1="924.29" y1="344.01" x2="924.29" y2="351.92" stroke="#12a012" stroke-width="0.9"/>
<rect x="922.19" y="346.12" width="4.2" height="3.43" fill="#fff"/>
<line x1="930.61" y1="347.44" x2="930.61" y2="361.14" stroke="#12a012" stroke-width="0.9"/>
<rect x="928.51" y="349.54" width="4.2" height="9.75" fill="#fff"/>
<line x1="936.93" y1="354.02" x2="936.93" y2="366.93" stroke="#12a012" stroke-width="0.9"/>
<rect x="934.83" y="359.03" width="4.2" height="1.84" fill="#fff"/>
<line x1="943.26" y1="355.87" x2="943.26" y2="370.36" stroke="#12a012" stroke-width="0.9"/>
<rect x="941.46" y="357.45" width="3.6" height="3.16" fill="#000" stroke="#12a012" stroke-width="0.9"/>
<line x1="949.58" y1="354.02" x2="949.58" y2="378.26" stroke="#12a012" stroke-width="0.9"/>
<rect x="947.48" y="357.45" width="4.2" height="9.75" fill="#fff"/>
<line x1="955.90" y1="367.20" x2="955.90" y2="391.44" stroke="#12a012" stroke-width="0.9"/>
<rect x="953.80" y="367.20" width="4.2" height="22.13" fill="#fff"/>
<line x1="962.23" y1="382.22" x2="962.23" y2="398.55" stroke="#12a012" stroke-width="0.9"/>
<rect x="960.43" y="384.32" width="3.6" height="4.22" fill="#000" stroke="#12a012" stroke-width="0.9"/>
<line x1="968.55" y1="375.63" x2="968.55" y2="411.20" stroke="#12a012" stroke-width="0.9"/>
<rect x="966.45" y="384.32" width="4.2" height="13.17" fill="#fff"/>
<line x1="974.87" y1="378.26" x2="974.87" y2="398.02" stroke="#12a012" stroke-width="0.9"/>
<rect x="973.07" y="391.17" width="3.6" height="6.32" fill="#000" stroke="#12a012" stroke-width="0.9"/>
<line x1="981.20" y1="346.12" x2="981.20" y2="408.56" stroke="#12a012" stroke-width="0.9"/>
<rect x="979.10" y="390.12" width="4.2" height="1.32" fill="#fff"/>
<line x1="987.52" y1="345.33" x2="987.52" y2="393.28" stroke="#12a012" stroke-width="0.9"/>
<rect x="985.72" y="346.12" width="3.6" height="44.53" fill="#000" stroke="#12a012" stroke-width="0.9"/>
<line x1="993.84" y1="307.92" x2="993.84" y2="347.96" stroke="#12a012" stroke-width="0.9"/>
<rect x="992.04" y="336.37" width="3.6" height="10.28" fill="#000" stroke="#12a012" stroke-width="0.9"/>
<line x1="1000.17" y1="325.57" x2="1000.17" y2="350.60" stroke="#12a012" stroke-width="0.9"/>
<rect x="998.07" y="336.11" width="4.2" height="1.58" fill="#fff"/>
<line x1="1006.49" y1="325.57" x2="1006.49" y2="348.49" stroke="#12a012" stroke-width="0.9"/>
<rect x="1004.69" y="336.37" width="3.6" height="1.58" fill="#000" stroke="#12a012" stroke-width="0.9"/>
<line x1="1012.81" y1="311.60" x2="1012.81" y2="338.74" stroke="#12a012" stroke-width="0.9"/>
<rect x="1011.01" y="317.14" width="3.6" height="20.29" fill="#000" stroke="#12a012" stroke-width="0.9"/>
<line x1="1019.14" y1="304.49" x2="1019.14" y2="321.62" stroke="#12a012" stroke-width="0.9"/>
<rect x="1017.04" y="316.87" width="4.2" height="1.58" fill="#fff"/>
<line x1="1025.46" y1="318.46" x2="1025.46" y2="328.20" stroke="#12a012" stroke-width="0.9"/>
<rect x="1023.36" y="318.98" width="4.2" height="5.80" fill="#fff"/>
<line x1="1031.78" y1="307.13" x2="1031.78" y2="326.89" stroke="#12a012" stroke-width="0.9"/>
<rect x="1029.98" y="307.92" width="3.6" height="17.65" fill="#000" stroke="#12a012" stroke-width="0.9"/>
<line x1="310.4" y1="96.7" x2="310.4" y2="173.7" stroke="#12a012" stroke-width="0.9"/>
<rect x="308.59999999999997" y="103.2" width="3.6" height="10.70" fill="#000" stroke="#12a012" stroke-width="0.9"/>
<line x1="316.4" y1="99" x2="316.4" y2="150" stroke="#12a012" stroke-width="0.9"/>
<rect x="314.59999999999997" y="103" width="3.6" height="37.50" fill="#000" stroke="#12a012" stroke-width="0.9"/>
<line x1="303.9" y1="194.4" x2="303.9" y2="225.6" stroke="#12a012" stroke-width="0.9"/>
<rect x="302.09999999999997" y="196" width="3.6" height="25.00" fill="#000" stroke="#12a012" stroke-width="0.9"/>
<line x1="297.4" y1="218" x2="297.4" y2="234.4" stroke="#12a012" stroke-width="0.9"/>
<rect x="295.59999999999997" y="220.5" width="3.6" height="12.50" fill="#000" stroke="#12a012" stroke-width="0.9"/>
<line x1="291.2" y1="231.5" x2="291.2" y2="243" stroke="#12a012" stroke-width="0.9"/>
<rect x="289.4" y="236" width="3.6" height="5.00" fill="#000" stroke="#12a012" stroke-width="0.9"/>
</svg>
<div class="t " style="left:1054.2px;top:55.35px;font-size:8.7px;color:#fff;;transform:scaleX(0.8215);transform-origin:left center;">5434.30</div>
<div class="t " style="left:1054.2px;top:81.07px;font-size:8.7px;color:#fff;;transform:scaleX(0.8215);transform-origin:left center;">5407.10</div>
<div class="t " style="left:1054.2px;top:106.79px;font-size:8.7px;color:#fff;;transform:scaleX(0.8215);transform-origin:left center;">5379.90</div>
<div class="t " style="left:1054.2px;top:132.51px;font-size:8.7px;color:#fff;;transform:scaleX(0.8215);transform-origin:left center;">5352.70</div>
<div class="t " style="left:1054.2px;top:158.23px;font-size:8.7px;color:#fff;;transform:scaleX(0.8215);transform-origin:left center;">5325.90</div>
<div class="t " style="left:1054.2px;top:183.95px;font-size:8.7px;color:#fff;;transform:scaleX(0.8215);transform-origin:left center;">5298.70</div>
<div class="t " style="left:1054.2px;top:209.67px;font-size:8.7px;color:#fff;;transform:scaleX(0.8215);transform-origin:left center;">5271.50</div>
<div class="t " style="left:1054.2px;top:235.39px;font-size:8.7px;color:#fff;;transform:scaleX(0.8215);transform-origin:left center;">5244.30</div>
<div class="t " style="left:1054.2px;top:261.11px;font-size:8.7px;color:#fff;;transform:scaleX(0.8215);transform-origin:left center;">5217.10</div>
<div class="t " style="left:1054.2px;top:286.83px;font-size:8.7px;color:#fff;;transform:scaleX(0.8215);transform-origin:left center;">5190.30</div>
<div class="t " style="left:1054.2px;top:312.55px;font-size:8.7px;color:#fff;;transform:scaleX(0.8215);transform-origin:left center;">5163.10</div>
<div class="t " style="left:1054.2px;top:338.27px;font-size:8.7px;color:#fff;;transform:scaleX(0.8215);transform-origin:left center;">5135.90</div>
<div class="t " style="left:1054.2px;top:363.99px;font-size:8.7px;color:#fff;;transform:scaleX(0.8215);transform-origin:left center;">5108.70</div>
<div class="t " style="left:1054.2px;top:389.71px;font-size:8.7px;color:#fff;;transform:scaleX(0.8215);transform-origin:left center;">5081.50</div>
<div class="t " style="left:1054.2px;top:415.43px;font-size:8.7px;color:#fff;;transform:scaleX(0.8215);transform-origin:left center;">5054.70</div>
<div class="t " style="left:1054.2px;top:441.15px;font-size:8.7px;color:#fff;;transform:scaleX(0.8215);transform-origin:left center;">5027.50</div>
<div class="t " style="left:1054.2px;top:466.87px;font-size:8.7px;color:#fff;;transform:scaleX(0.8215);transform-origin:left center;">5000.30</div>
<div class="a" style="left:1051.1px;top:303.5px;width:28.9px;height:8.9px;background:#fff;"></div>
<div class="t " style="left:1054.2px;top:304.15px;font-size:8.7px;color:#000;;transform:scaleX(0.8215);transform-origin:left center;">5171.37</div>
<div class="t " style="left:898.4px;top:487.40px;font-size:8.4px;color:#fff;;transform:scaleX(0.8948);transform-origin:left center;">6 Mar 02:00</div>
<div class="a" style="left:897.5px;top:484.3px;width:0.9px;height:3px;background:#aaa;"></div>
<div class="t " style="left:949px;top:487.40px;font-size:8.4px;color:#fff;;transform:scaleX(0.8948);transform-origin:left center;">6 Mar 10:00</div>
<div class="a" style="left:948.1px;top:484.3px;width:0.9px;height:3px;background:#aaa;"></div>
<div class="t " style="left:999.6px;top:487.40px;font-size:8.4px;color:#fff;;transform:scaleX(0.8948);transform-origin:left center;">6 Mar 18:00</div>
<div class="a" style="left:998.7px;top:484.3px;width:0.9px;height:3px;background:#aaa;"></div>
<div class="t r " style="right:192.40px;top:487.40px;font-size:8.4px;color:#fff;;transform:scaleX(0.8948);transform-origin:right center;">5 Mar 17:00</div>
<div class="t " style="left:291.6px;top:487.20px;font-size:8.4px;color:#fff;;transform:scaleX(0.8283);transform-origin:left center;">27 Feb</div>
<svg class="a" style="left:292.3px;top:56.3px" width="5" height="3" viewBox="0 0 5 3"><path d="M0 0H5L2.5 2.7Z" fill="#fff"/></svg>
<div class="t " style="left:301.9px;top:54.40px;font-size:7.8px;color:#fff;">XAUUSD,H1</div>
<div class="t " style="left:929.7px;top:54.20px;font-size:9.2px;color:#fff;;transform:scaleX(0.8235);transform-origin:left center;">[eaclubshare.com]<span style="color:#c8c8c8;font-size:8.6px">黄金突破源码</span></div>
<svg class="a" style="left:1039.5px;top:54.5px" width="9" height="9" viewBox="0 0 9 9"><circle cx="4.5" cy="4.5" r="3.8" fill="none" stroke="#ddd" stroke-width="0.8"/><circle cx="3.2" cy="3.6" r="0.55" fill="#ddd"/><circle cx="5.8" cy="3.6" r="0.55" fill="#ddd"/><path d="M2.6 5.4Q4.5 7.2 6.4 5.4" fill="none" stroke="#ddd" stroke-width="0.7"/></svg>
<div class="a" style="left:289.3px;top:497.9px;width:791px;height:16.3px;background:#f0f0f0;border-top:1px solid #a8a8a8"></div>
<div class="a" style="left:289.6px;top:498px;width:70px;height:15.8px;background:#f0f0f0;border:0.9px solid #9c9c9c;border-top:none"></div>
<div class="t " style="left:301.1px;top:500.60px;font-size:10.4px;color:#7a7a7a;">AUDCHF,H1</div>
<svg class="a" style="left:1060px;top:501px" width="20" height="9" viewBox="0 0 20 9"><path d="M5.5 1.2V7.8L2 4.5Z" fill="#9a9a9a"/><path d="M16.5 1.2V7.8L20 4.5Z" fill="#9a9a9a"/></svg>
<div class="a" style="left:7px;top:514.2px;width:1073px;height:3.6px;background:#e6e6e6;"></div>
<div class="a" style="left:7px;top:517.8px;width:12px;height:90px;background:linear-gradient(90deg,#e4ecf7,#d6e2f2);"></div>
<div class="t " style="left:9.2px;top:518.60px;font-size:7.6px;color:#000;font-weight:bold">&#x2715;</div>
<div class="a" style="left:19px;top:518px;width:1061px;height:16px;background:#fff;"></div>
<div class="a" style="left:19px;top:549px;width:1061px;height:58px;background:#fff;"></div>
<div class="a" style="left:19px;top:534.2px;width:1061px;height:14.8px;background:#c8c8c8;"></div>
<div class="t " style="left:21px;top:521.80px;font-size:9.4px;color:#000;"><span style="letter-spacing:0.4px">订单</span></div>
<div class="t " style="left:44.5px;top:522.50px;font-size:5px;color:#aaa;">&#x2044;</div>
<div class="t r " style="right:859.50px;top:521.80px;font-size:9.4px;color:#000;"><span style="letter-spacing:0.4px">时间</span></div>
<div class="t r " style="right:799.00px;top:521.80px;font-size:9.4px;color:#000;"><span style="letter-spacing:0.4px">类型</span></div>
<div class="t " style="left:308.3px;top:521.80px;font-size:9.4px;color:#000;"><span style="letter-spacing:0.4px">手数</span></div>
<div class="t " style="left:863.6px;top:521.80px;font-size:9.4px;color:#000;"><span style="letter-spacing:0.4px">获利</span></div>
<div class="t r " style="right:-1.50px;top:521.80px;font-size:9.4px;color:#000;"><span style="letter-spacing:0.4px">注释</span></div>
<div class="a" style="left:104.2px;top:518px;width:0.7px;height:15.5px;background:#e2e2e2;"></div>
<div class="a" style="left:223px;top:518px;width:0.7px;height:15.5px;background:#e2e2e2;"></div>
<div class="a" style="left:284px;top:518px;width:0.7px;height:15.5px;background:#e2e2e2;"></div>
<svg class="a" style="left:23.5px;top:538.8px" width="6" height="6" viewBox="0 0 6 6"><circle cx="3" cy="3" r="2.4" fill="#d8d8d8" stroke="#8c8c8c" stroke-width="0.8"/></svg>
<div class="t " style="left:34.5px;top:536.80px;font-size:9.6px;color:#000;font-weight:bold;transform:scaleX(1.0315);transform-origin:left center;">余额: 10 286.84 USD&nbsp; 净值: 10 286.84&nbsp; 可用预付款: 10 286.84</div>
<div class="t r " style="right:199.70px;top:536.80px;font-size:9.6px;color:#000;font-weight:bold">0.00</div>
<div class="a" style="left:316.3px;top:49.1px;width:557.7px;height:537.3px;background:#f0f0f0;border-radius:5px;box-shadow:0 0 0 0.6px rgba(0,0,0,.16),0 12px 26px 4px rgba(0,0,0,.27),0 2px 6px rgba(0,0,0,.12);overflow:hidden">
<div class="a" style="left:0;top:0;width:100%;height:21.8px;background:#f4f4f4"></div>
</div>
<div class="t " style="left:321px;top:55.90px;font-size:10.2px;color:#000;;transform:scaleX(0.9068);transform-origin:left center;">Expert - [eaclubshare.com]</div>
<div class="t " style="left:431.6px;top:56.45px;font-size:9.5px;color:#000;"><span style="letter-spacing:-0.5px">黄金突破源码</span></div>
<div class="t " style="left:815.6px;top:55.75px;font-size:10.5px;color:#333;">?</div>
<svg class="a" style="left:850.6px;top:55.9px" width="9" height="9" viewBox="0 0 9 9"><path d="M0.6 0.6L8.4 8.4M8.4 0.6L0.6 8.4" stroke="#1a1a1a" stroke-width="0.95"/></svg>
<div class="a" style="left:324px;top:80.8px;width:73.6px;height:15.8px;background:#f5f5f5;"></div>
<div class="a" style="left:360.2px;top:81.5px;width:0.6px;height:14.5px;background:#ececec;"></div>
<div class="a" style="left:397.8px;top:79px;width:50px;height:18px;background:#f9f9f9;border-radius:2px 2px 0 0"></div>
<div class="t " style="left:328px;top:84.10px;font-size:9.4px;color:#000;"><span style="letter-spacing:0.4px">关于</span></div>
<div class="t " style="left:366px;top:84.10px;font-size:9.4px;color:#000;"><span style="letter-spacing:0.4px">常用</span></div>
<div class="t " style="left:403.2px;top:82.40px;font-size:9.6px;color:#000;"><span style="letter-spacing:-0.4px">输入参数</span></div>
<div class="a" style="left:322px;top:96.5px;width:546.2px;height:460px;background:#f9f9f9;"></div>
<div class="a" style="left:328px;top:100.8px;width:432.4px;height:453.59999999999997px;background:#fff;border:0.8px solid #c3c6d4"></div>
<div class="t " style="left:330.8px;top:105.30px;font-size:9.4px;color:#000;"><span style="letter-spacing:0.4px">变量</span></div>
<div class="t " style="left:546px;top:105.30px;font-size:9.4px;color:#000;"><span style="letter-spacing:0.4px">赋值</span></div>
<svg class="a" style="left:329.4px;top:118.05px" width="13.4" height="12.8" viewBox="0 0 13 12.4"><path d="M1.6 0.5H9.2L12.4 3.6V10.6Q12.4 11.9 11 11.9H1.6Q0.5 11.9 0.5 10.6V1.7Q0.5 0.5 1.6 0.5Z" fill="#efe184" stroke="#d6c04a" stroke-width="0.8"/><path d="M9.2 0.5V3.6H12.4Z" fill="#fff" fill-opacity="0.75" stroke="#d6c04a" stroke-width="0.5"/><text x="1.5" y="9.4" font-family="Liberation Sans,sans-serif" font-size="8.6" font-weight="bold" fill="#6e5e12" textLength="8.8" lengthAdjust="spacingAndGlyphs">ab</text></svg>
<div class="t " style="left:345.1px;top:120.28px;font-size:9.4px;color:#000;-webkit-text-stroke:0.12px #000"><span style="letter-spacing:0.4px">注释</span></div>
<div class="t " style="left:546px;top:120.59px;font-size:10.2px;color:#000;;transform:scaleX(0.9840);transform-origin:left center;">[eaclubshare.com]<span style="font-size:9.4px;letter-spacing:0.4px;-webkit-text-stroke:0.12px #000">黄金突破</span>EA</div>
<div class="a" style="left:328.8px;top:132.22px;width:430.79999999999995px;height:15.47px;background:#e9e9e9;"></div>
<svg class="a" style="left:329.4px;top:133.52px" width="13.4" height="12.8" viewBox="0 0 13 12.4"><path d="M1.6 0.5H9.2L12.4 3.6V10.6Q12.4 11.9 11 11.9H1.6Q0.5 11.9 0.5 10.6V1.7Q0.5 0.5 1.6 0.5Z" fill="#efe184" stroke="#d6c04a" stroke-width="0.8"/><path d="M9.2 0.5V3.6H12.4Z" fill="#fff" fill-opacity="0.75" stroke="#d6c04a" stroke-width="0.5"/><text x="1.5" y="9.4" font-family="Liberation Sans,sans-serif" font-size="8.6" font-weight="bold" fill="#6e5e12" textLength="8.8" lengthAdjust="spacingAndGlyphs">ab</text></svg>
<div class="t " style="left:345.4px;top:136.06px;font-size:10.2px;color:#000;;transform:scaleX(1.0130);transform-origin:left center;">Configuration</div>
<div class="t " style="left:546px;top:136.06px;font-size:10.2px;color:#000;;transform:scaleX(1.1026);transform-origin:left center;">==== Setting ====</div>
<svg class="a" style="left:329.4px;top:148.99px" width="13.4" height="12.8" viewBox="0 0 13 12.4"><path d="M1.6 0.5H9.2L12.4 3.6V10.6Q12.4 11.9 11 11.9H1.6Q0.5 11.9 0.5 10.6V1.7Q0.5 0.5 1.6 0.5Z" fill="#8fc0ee" stroke="#4f8fd6" stroke-width="0.8"/><path d="M9.2 0.5V3.6H12.4Z" fill="#fff" fill-opacity="0.75" stroke="#4f8fd6" stroke-width="0.5"/><rect x="1.2" y="3.4" width="10" height="6" rx="1" fill="#2c69c0"/><text x="1.9" y="8.4" font-family="Liberation Sans,sans-serif" font-size="5.4" font-weight="bold" fill="#e8f2ff" textLength="8.4" lengthAdjust="spacingAndGlyphs">123</text></svg>
<div class="t " style="left:345.1px;top:151.23px;font-size:9.4px;color:#000;-webkit-text-stroke:0.12px #000"><span style="letter-spacing:0.4px">魔术码</span></div>
<div class="t " style="left:546px;top:151.53px;font-size:10.2px;color:#000;">6666</div>
<div class="a" style="left:328.8px;top:163.16px;width:430.79999999999995px;height:15.47px;background:#e9e9e9;"></div>
<svg class="a" style="left:329.4px;top:164.46px" width="13.4" height="12.8" viewBox="0 0 13 12.4"><path d="M1.6 0.5H9.2L12.4 3.6V10.6Q12.4 11.9 11 11.9H1.6Q0.5 11.9 0.5 10.6V1.7Q0.5 0.5 1.6 0.5Z" fill="#7fe07f" stroke="#35b835" stroke-width="0.8"/><path d="M9.2 0.5V3.6H12.4Z" fill="#fff" fill-opacity="0.75" stroke="#35b835" stroke-width="0.5"/><path d="M2 8.6L5 5.2L6.6 6.6H10.4" stroke="#fff" stroke-width="1.3" fill="none" stroke-linejoin="round"/></svg>
<div class="t " style="left:345.1px;top:166.70px;font-size:9.4px;color:#000;-webkit-text-stroke:0.12px #000"><span style="letter-spacing:0.4px">复利开关</span></div>
<div class="t " style="left:546px;top:167.00px;font-size:10.2px;color:#000;">false</div>
<svg class="a" style="left:329.4px;top:179.93px" width="13.4" height="12.8" viewBox="0 0 13 12.4"><path d="M1.6 0.5H9.2L12.4 3.6V10.6Q12.4 11.9 11 11.9H1.6Q0.5 11.9 0.5 10.6V1.7Q0.5 0.5 1.6 0.5Z" fill="#8fc0ee" stroke="#4f8fd6" stroke-width="0.8"/><path d="M9.2 0.5V3.6H12.4Z" fill="#fff" fill-opacity="0.75" stroke="#4f8fd6" stroke-width="0.5"/><rect x="1.2" y="3.4" width="10" height="6" rx="1" fill="#2c69c0"/><text x="1.9" y="8.4" font-family="Liberation Sans,sans-serif" font-size="5.4" font-weight="bold" fill="#e8f2ff" textLength="8.4" lengthAdjust="spacingAndGlyphs">123</text></svg>
<div class="t " style="left:345.1px;top:182.17px;font-size:9.4px;color:#000;-webkit-text-stroke:0.12px #000"><span style="letter-spacing:0.4px">多少秒改变一次</span></div>
<div class="t " style="left:545.8px;top:182.17px;font-size:9.4px;color:#000;-webkit-text-stroke:0.12px #000"><span style="letter-spacing:0.4px">一秒</span></div>
<div class="a" style="left:328.8px;top:194.10000000000002px;width:430.79999999999995px;height:15.47px;background:#e9e9e9;"></div>
<svg class="a" style="left:329.4px;top:195.40px" width="13.4" height="12.8" viewBox="0 0 13 12.4"><path d="M1.6 0.5H9.2L12.4 3.6V10.6Q12.4 11.9 11 11.9H1.6Q0.5 11.9 0.5 10.6V1.7Q0.5 0.5 1.6 0.5Z" fill="#8fc0ee" stroke="#4f8fd6" stroke-width="0.8"/><path d="M9.2 0.5V3.6H12.4Z" fill="#fff" fill-opacity="0.75" stroke="#4f8fd6" stroke-width="0.5"/><rect x="1.2" y="3.4" width="10" height="6" rx="1" fill="#2c69c0"/><text x="1.9" y="8.4" font-family="Liberation Sans,sans-serif" font-size="5.4" font-weight="bold" fill="#e8f2ff" textLength="8.4" lengthAdjust="spacingAndGlyphs">123</text></svg>
<div class="t " style="left:345.1px;top:197.64px;font-size:9.4px;color:#000;-webkit-text-stroke:0.12px #000"><span style="letter-spacing:0.4px">复利</span></div>
<div class="t " style="left:546px;top:197.94px;font-size:10.2px;color:#000;">VerySafe</div>
<svg class="a" style="left:329.4px;top:210.87px" width="13.4" height="12.8" viewBox="0 0 13 12.4"><path d="M1.6 0.5H9.2L12.4 3.6V10.6Q12.4 11.9 11 11.9H1.6Q0.5 11.9 0.5 10.6V1.7Q0.5 0.5 1.6 0.5Z" fill="#a5e6ea" stroke="#5cc4cc" stroke-width="0.8"/><path d="M9.2 0.5V3.6H12.4Z" fill="#fff" fill-opacity="0.75" stroke="#5cc4cc" stroke-width="0.5"/><text x="2.2" y="9" font-family="Liberation Sans,sans-serif" font-size="7" font-weight="bold" fill="#2a8a94" textLength="7.6" lengthAdjust="spacingAndGlyphs">&#189;</text></svg>
<div class="t " style="left:345.1px;top:213.11px;font-size:9.4px;color:#000;-webkit-text-stroke:0.12px #000"><span style="letter-spacing:0.4px">手数</span></div>
<div class="t " style="left:546px;top:213.41px;font-size:10.2px;color:#000;">0.01</div>
<div class="a" style="left:328.8px;top:225.04000000000002px;width:430.79999999999995px;height:15.47px;background:#e9e9e9;"></div>
<svg class="a" style="left:329.4px;top:226.34px" width="13.4" height="12.8" viewBox="0 0 13 12.4"><path d="M1.6 0.5H9.2L12.4 3.6V10.6Q12.4 11.9 11 11.9H1.6Q0.5 11.9 0.5 10.6V1.7Q0.5 0.5 1.6 0.5Z" fill="#8fc0ee" stroke="#4f8fd6" stroke-width="0.8"/><path d="M9.2 0.5V3.6H12.4Z" fill="#fff" fill-opacity="0.75" stroke="#4f8fd6" stroke-width="0.5"/><rect x="1.2" y="3.4" width="10" height="6" rx="1" fill="#2c69c0"/><text x="1.9" y="8.4" font-family="Liberation Sans,sans-serif" font-size="5.4" font-weight="bold" fill="#e8f2ff" textLength="8.4" lengthAdjust="spacingAndGlyphs">123</text></svg>
<div class="t " style="left:345.1px;top:228.58px;font-size:9.4px;color:#000;-webkit-text-stroke:0.12px #000"><span style="letter-spacing:0.4px">止损</span></div>
<div class="t " style="left:546px;top:228.88px;font-size:10.2px;color:#000;">250</div>
<svg class="a" style="left:329.4px;top:241.81px" width="13.4" height="12.8" viewBox="0 0 13 12.4"><path d="M1.6 0.5H9.2L12.4 3.6V10.6Q12.4 11.9 11 11.9H1.6Q0.5 11.9 0.5 10.6V1.7Q0.5 0.5 1.6 0.5Z" fill="#8fc0ee" stroke="#4f8fd6" stroke-width="0.8"/><path d="M9.2 0.5V3.6H12.4Z" fill="#fff" fill-opacity="0.75" stroke="#4f8fd6" stroke-width="0.5"/><rect x="1.2" y="3.4" width="10" height="6" rx="1" fill="#2c69c0"/><text x="1.9" y="8.4" font-family="Liberation Sans,sans-serif" font-size="5.4" font-weight="bold" fill="#e8f2ff" textLength="8.4" lengthAdjust="spacingAndGlyphs">123</text></svg>
<div class="t " style="left:345.1px;top:244.05px;font-size:9.4px;color:#000;-webkit-text-stroke:0.12px #000"><span style="letter-spacing:0.4px">止盈</span></div>
<div class="t " style="left:546px;top:244.34px;font-size:10.2px;color:#000;">1250</div>
<div class="a" style="left:328.8px;top:255.98000000000002px;width:430.79999999999995px;height:15.47px;background:#e9e9e9;"></div>
<svg class="a" style="left:329.4px;top:257.28px" width="13.4" height="12.8" viewBox="0 0 13 12.4"><path d="M1.6 0.5H9.2L12.4 3.6V10.6Q12.4 11.9 11 11.9H1.6Q0.5 11.9 0.5 10.6V1.7Q0.5 0.5 1.6 0.5Z" fill="#8fc0ee" stroke="#4f8fd6" stroke-width="0.8"/><path d="M9.2 0.5V3.6H12.4Z" fill="#fff" fill-opacity="0.75" stroke="#4f8fd6" stroke-width="0.5"/><rect x="1.2" y="3.4" width="10" height="6" rx="1" fill="#2c69c0"/><text x="1.9" y="8.4" font-family="Liberation Sans,sans-serif" font-size="5.4" font-weight="bold" fill="#e8f2ff" textLength="8.4" lengthAdjust="spacingAndGlyphs">123</text></svg>
<div class="t " style="left:345.1px;top:259.52px;font-size:9.4px;color:#000;-webkit-text-stroke:0.12px #000"><span style="letter-spacing:0.4px">最大点差限制</span></div>
<div class="t " style="left:546px;top:259.81px;font-size:10.2px;color:#000;">30</div>
<svg class="a" style="left:329.4px;top:272.75px" width="13.4" height="12.8" viewBox="0 0 13 12.4"><path d="M1.6 0.5H9.2L12.4 3.6V10.6Q12.4 11.9 11 11.9H1.6Q0.5 11.9 0.5 10.6V1.7Q0.5 0.5 1.6 0.5Z" fill="#8fc0ee" stroke="#4f8fd6" stroke-width="0.8"/><path d="M9.2 0.5V3.6H12.4Z" fill="#fff" fill-opacity="0.75" stroke="#4f8fd6" stroke-width="0.5"/><rect x="1.2" y="3.4" width="10" height="6" rx="1" fill="#2c69c0"/><text x="1.9" y="8.4" font-family="Liberation Sans,sans-serif" font-size="5.4" font-weight="bold" fill="#e8f2ff" textLength="8.4" lengthAdjust="spacingAndGlyphs">123</text></svg>
<div class="t " style="left:345.1px;top:274.99px;font-size:9.4px;color:#000;-webkit-text-stroke:0.12px #000"><span style="letter-spacing:0.4px">秒数</span></div>
<div class="t " style="left:546px;top:275.29px;font-size:10.2px;color:#000;">90</div>
<div class="a" style="left:328.8px;top:286.92px;width:430.79999999999995px;height:15.47px;background:#e9e9e9;"></div>
<svg class="a" style="left:329.4px;top:288.22px" width="13.4" height="12.8" viewBox="0 0 13 12.4"><path d="M1.6 0.5H9.2L12.4 3.6V10.6Q12.4 11.9 11 11.9H1.6Q0.5 11.9 0.5 10.6V1.7Q0.5 0.5 1.6 0.5Z" fill="#8fc0ee" stroke="#4f8fd6" stroke-width="0.8"/><path d="M9.2 0.5V3.6H12.4Z" fill="#fff" fill-opacity="0.75" stroke="#4f8fd6" stroke-width="0.5"/><rect x="1.2" y="3.4" width="10" height="6" rx="1" fill="#2c69c0"/><text x="1.9" y="8.4" font-family="Liberation Sans,sans-serif" font-size="5.4" font-weight="bold" fill="#e8f2ff" textLength="8.4" lengthAdjust="spacingAndGlyphs">123</text></svg>
<div class="t " style="left:345.1px;top:290.46px;font-size:9.4px;color:#000;-webkit-text-stroke:0.12px #000"><span style="letter-spacing:0.4px">开始时间</span></div>
<div class="t " style="left:546px;top:290.75px;font-size:10.2px;color:#000;">2</div>
<svg class="a" style="left:329.4px;top:303.69px" width="13.4" height="12.8" viewBox="0 0 13 12.4"><path d="M1.6 0.5H9.2L12.4 3.6V10.6Q12.4 11.9 11 11.9H1.6Q0.5 11.9 0.5 10.6V1.7Q0.5 0.5 1.6 0.5Z" fill="#8fc0ee" stroke="#4f8fd6" stroke-width="0.8"/><path d="M9.2 0.5V3.6H12.4Z" fill="#fff" fill-opacity="0.75" stroke="#4f8fd6" stroke-width="0.5"/><rect x="1.2" y="3.4" width="10" height="6" rx="1" fill="#2c69c0"/><text x="1.9" y="8.4" font-family="Liberation Sans,sans-serif" font-size="5.4" font-weight="bold" fill="#e8f2ff" textLength="8.4" lengthAdjust="spacingAndGlyphs">123</text></svg>
<div class="t " style="left:345.1px;top:305.93px;font-size:9.4px;color:#000;-webkit-text-stroke:0.12px #000"><span style="letter-spacing:0.4px">结束时间</span></div>
<div class="t " style="left:546px;top:306.22px;font-size:10.2px;color:#000;">23</div>
<div class="a" style="left:328.8px;top:317.86px;width:430.79999999999995px;height:15.47px;background:#e9e9e9;"></div>
<svg class="a" style="left:329.4px;top:319.16px" width="13.4" height="12.8" viewBox="0 0 13 12.4"><path d="M1.6 0.5H9.2L12.4 3.6V10.6Q12.4 11.9 11 11.9H1.6Q0.5 11.9 0.5 10.6V1.7Q0.5 0.5 1.6 0.5Z" fill="#8fc0ee" stroke="#4f8fd6" stroke-width="0.8"/><path d="M9.2 0.5V3.6H12.4Z" fill="#fff" fill-opacity="0.75" stroke="#4f8fd6" stroke-width="0.5"/><rect x="1.2" y="3.4" width="10" height="6" rx="1" fill="#2c69c0"/><text x="1.9" y="8.4" font-family="Liberation Sans,sans-serif" font-size="5.4" font-weight="bold" fill="#e8f2ff" textLength="8.4" lengthAdjust="spacingAndGlyphs">123</text></svg>
<div class="t " style="left:345.1px;top:321.40px;font-size:9.4px;color:#000;-webkit-text-stroke:0.12px #000"><span style="letter-spacing:0.4px">每隔多少秒改止损</span></div>
<div class="t " style="left:546px;top:321.69px;font-size:10.2px;color:#000;">5</div>
<svg class="a" style="left:329.4px;top:334.63px" width="13.4" height="12.8" viewBox="0 0 13 12.4"><path d="M1.6 0.5H9.2L12.4 3.6V10.6Q12.4 11.9 11 11.9H1.6Q0.5 11.9 0.5 10.6V1.7Q0.5 0.5 1.6 0.5Z" fill="#8fc0ee" stroke="#4f8fd6" stroke-width="0.8"/><path d="M9.2 0.5V3.6H12.4Z" fill="#fff" fill-opacity="0.75" stroke="#4f8fd6" stroke-width="0.5"/><rect x="1.2" y="3.4" width="10" height="6" rx="1" fill="#2c69c0"/><text x="1.9" y="8.4" font-family="Liberation Sans,sans-serif" font-size="5.4" font-weight="bold" fill="#e8f2ff" textLength="8.4" lengthAdjust="spacingAndGlyphs">123</text></svg>
<div class="t " style="left:345.1px;top:336.87px;font-size:9.4px;color:#000;-webkit-text-stroke:0.12px #000"><span style="letter-spacing:0.4px">每隔多少点改止损</span></div>
<div class="t " style="left:546px;top:337.17px;font-size:10.2px;color:#000;">30</div>
<div class="a" style="left:328.8px;top:348.8px;width:430.79999999999995px;height:15.47px;background:#e9e9e9;"></div>
<svg class="a" style="left:329.4px;top:350.10px" width="13.4" height="12.8" viewBox="0 0 13 12.4"><path d="M1.6 0.5H9.2L12.4 3.6V10.6Q12.4 11.9 11 11.9H1.6Q0.5 11.9 0.5 10.6V1.7Q0.5 0.5 1.6 0.5Z" fill="#efe184" stroke="#d6c04a" stroke-width="0.8"/><path d="M9.2 0.5V3.6H12.4Z" fill="#fff" fill-opacity="0.75" stroke="#d6c04a" stroke-width="0.5"/><text x="1.5" y="9.4" font-family="Liberation Sans,sans-serif" font-size="8.6" font-weight="bold" fill="#6e5e12" textLength="8.8" lengthAdjust="spacingAndGlyphs">ab</text></svg>
<div class="t " style="left:345.1px;top:352.34px;font-size:9.4px;color:#000;-webkit-text-stroke:0.12px #000"><span style="letter-spacing:0.4px">说明</span></div>
<div class="t " style="left:545.8px;top:352.34px;font-size:9.4px;color:#000;-webkit-text-stroke:0.12px #000"><span style="letter-spacing:0.4px">精品外汇论坛</span></div>
<svg class="a" style="left:329.4px;top:365.57px" width="13.4" height="12.8" viewBox="0 0 13 12.4"><path d="M1.6 0.5H9.2L12.4 3.6V10.6Q12.4 11.9 11 11.9H1.6Q0.5 11.9 0.5 10.6V1.7Q0.5 0.5 1.6 0.5Z" fill="#efe184" stroke="#d6c04a" stroke-width="0.8"/><path d="M9.2 0.5V3.6H12.4Z" fill="#fff" fill-opacity="0.75" stroke="#d6c04a" stroke-width="0.5"/><text x="1.5" y="9.4" font-family="Liberation Sans,sans-serif" font-size="8.6" font-weight="bold" fill="#6e5e12" textLength="8.8" lengthAdjust="spacingAndGlyphs">ab</text></svg>
<div class="t " style="left:345.1px;top:367.81px;font-size:9.4px;color:#000;-webkit-text-stroke:0.12px #000"><span style="letter-spacing:0.4px">网址</span></div>
<div class="t " style="left:546px;top:368.10px;font-size:10.2px;color:#000;">eaclubshare.com</div>
<div class="a" style="left:328.8px;top:379.74px;width:430.79999999999995px;height:15.47px;background:#e9e9e9;"></div>
<svg class="a" style="left:329.4px;top:381.04px" width="13.4" height="12.8" viewBox="0 0 13 12.4"><path d="M1.6 0.5H9.2L12.4 3.6V10.6Q12.4 11.9 11 11.9H1.6Q0.5 11.9 0.5 10.6V1.7Q0.5 0.5 1.6 0.5Z" fill="#efe184" stroke="#d6c04a" stroke-width="0.8"/><path d="M9.2 0.5V3.6H12.4Z" fill="#fff" fill-opacity="0.75" stroke="#d6c04a" stroke-width="0.5"/><text x="1.5" y="9.4" font-family="Liberation Sans,sans-serif" font-size="8.6" font-weight="bold" fill="#6e5e12" textLength="8.8" lengthAdjust="spacingAndGlyphs">ab</text></svg>
<div class="t " style="left:345.1px;top:383.28px;font-size:9.4px;color:#000;-webkit-text-stroke:0.12px #000"><span style="letter-spacing:0.4px">微信</span></div>
<div class="t " style="left:546px;top:383.57px;font-size:10.2px;color:#000;">eaclubshare</div>
<svg class="a" style="left:329.4px;top:396.51px" width="13.4" height="12.8" viewBox="0 0 13 12.4"><path d="M1.6 0.5H9.2L12.4 3.6V10.6Q12.4 11.9 11 11.9H1.6Q0.5 11.9 0.5 10.6V1.7Q0.5 0.5 1.6 0.5Z" fill="#efe184" stroke="#d6c04a" stroke-width="0.8"/><path d="M9.2 0.5V3.6H12.4Z" fill="#fff" fill-opacity="0.75" stroke="#d6c04a" stroke-width="0.5"/><text x="1.5" y="9.4" font-family="Liberation Sans,sans-serif" font-size="8.6" font-weight="bold" fill="#6e5e12" textLength="8.8" lengthAdjust="spacingAndGlyphs">ab</text></svg>
<div class="t " style="left:345.5px;top:399.05px;font-size:10.2px;color:#000;">QQ</div>
<div class="t " style="left:546px;top:399.05px;font-size:10.2px;color:#000;">2972049992</div>
<div class="a" style="left:543px;top:101.6px;width:0.7px;height:309.88px;background:#e3e3e3;"></div>
<div class="a" style="left:328.8px;top:410.68px;width:430.79999999999995px;height:0.6px;background:#e8e8e8;"></div>
<div class="a" style="left:767px;top:500.3px;width:95.89999999999998px;height:21.599999999999966px;background:#fdfdfd;border:0.9px solid #e6e6e6;border-radius:2.5px;border-bottom-color:#d8d8d8"></div>
<div class="t " style="left:0px;top:506.88px;font-size:9.45px;color:#000;left:767px;width:95.89999999999998px;text-align:center"><span style="font-size:9.4px;letter-spacing:0.4px;">加载</span>(L)</div>
<div class="a" style="left:767px;top:530.9px;width:95.89999999999998px;height:21.399999999999977px;background:#fdfdfd;border:0.9px solid #e6e6e6;border-radius:2.5px;border-bottom-color:#d8d8d8"></div>
<div class="t " style="left:0px;top:537.37px;font-size:9.45px;color:#000;left:767px;width:95.89999999999998px;text-align:center"><span style="font-size:9.4px;letter-spacing:0.4px;">保存</span>(S)</div>
<div class="a" style="left:648px;top:558.8px;width:69.79999999999995px;height:21.40000000000009px;background:#fdfdfd;border:0.9px solid #86bff2;border-radius:2.5px;border-bottom-color:#78b6ee"></div>
<div class="t " style="left:0px;top:565.27px;font-size:9.45px;color:#000;left:648px;width:69.79999999999995px;text-align:center"><span style="letter-spacing:0.45px">确定</span></div>
<div class="a" style="left:723.3px;top:558.8px;width:69.0px;height:21.40000000000009px;background:#fdfdfd;border:0.9px solid #e6e6e6;border-radius:2.5px;border-bottom-color:#d8d8d8"></div>
<div class="t " style="left:0px;top:565.27px;font-size:9.45px;color:#000;left:723.3px;width:69.0px;text-align:center"><span style="letter-spacing:0.45px">取消</span></div>
<div class="a" style="left:798px;top:558.8px;width:68.79999999999995px;height:21.40000000000009px;background:#fdfdfd;border:0.9px solid #e6e6e6;border-radius:2.5px;border-bottom-color:#d8d8d8"></div>
<div class="t " style="left:0px;top:565.27px;font-size:9.45px;color:#000;left:798px;width:68.79999999999995px;text-align:center"><span style="letter-spacing:0.45px">重设</span></div>
<svg class="a" style="left:0;top:0" width="1080" height="607" viewBox="0 0 1080 607" role="img" aria-label="精品EA"><path transform="translate(514.635 552.160) scale(0.02584 -0.02377)" d="M311 793C302 732 285 650 268 589V845H162V516H35V404H145C115 313 67 206 18 144C36 110 63 56 74 19C105 67 136 133 162 204V-86H268V255C292 209 315 161 327 129L403 221C383 251 296 369 271 396L268 394V404H364V516H268V561L331 542C355 600 382 694 406 773ZM34 768C57 696 77 601 79 540L162 561C157 622 138 716 112 787ZM613 848V776H418V691H613V651H443V571H613V527H390V441H966V527H726V571H918V651H726V691H940V776H726V848ZM795 315V267H554V315ZM443 400V-90H554V62H795V20C795 9 792 5 779 5C766 4 724 4 687 6C700 -21 714 -61 718 -89C782 -90 829 -88 864 -73C898 -58 908 -31 908 18V400ZM554 188H795V140H554Z" fill="#1458e4"/><path transform="translate(542.032 551.760) scale(0.02526 -0.02378)" d="M324 695H676V561H324ZM208 810V447H798V810ZM70 363V-90H184V-39H333V-84H453V363ZM184 76V248H333V76ZM537 363V-90H652V-39H813V-85H933V363ZM652 76V248H813V76Z" fill="#1458e4"/><path transform="translate(568.030 552.400) scale(0.02495 -0.02416)" d="M91 0H556V124H239V322H498V446H239V617H545V741H91Z" fill="#1458e4"/><path transform="translate(583.513 552.400) scale(0.02835 -0.02416)" d="M-4 0H146L198 190H437L489 0H645L408 741H233ZM230 305 252 386C274 463 295 547 315 628H319C341 549 361 463 384 386L406 305Z" fill="#1458e4"/><path d="M471.3 536.4H490.2L496.2 550.2L494.8 552.3H477.2L470.7 537.4Z" fill="#1458e4" stroke="#1458e4" stroke-width="1.6" stroke-linejoin="round"/><path d="M466.5 540.6L468.3 540.9L474.9 556.3H493.2L491.2 558.4H472.7L465.5 542Z" fill="#1458e4" stroke="#1458e4" stroke-width="0.8" stroke-linejoin="round"/><path d="M462.1 545.7L463.9 546.1L470.5 562.5H487.8L485.9 564.7H468.3L461.2 547.4Z" fill="#1458e4" stroke="#1458e4" stroke-width="0.8" stroke-linejoin="round"/></svg>
<div class="t " style="left:502.8px;top:557.60px;font-size:14px;color:#1458e4;font-weight:bold;transform:scaleX(1.0106);transform-origin:left center;">eaclubshare.com</div>
<div class="t " style="left:613px;top:594.25px;font-size:4.5px;color:#fff;letter-spacing:0.2px;opacity:.9;transform:scaleX(1.2296);transform-origin:left center;">ZBXDR</div>
</body></html>
